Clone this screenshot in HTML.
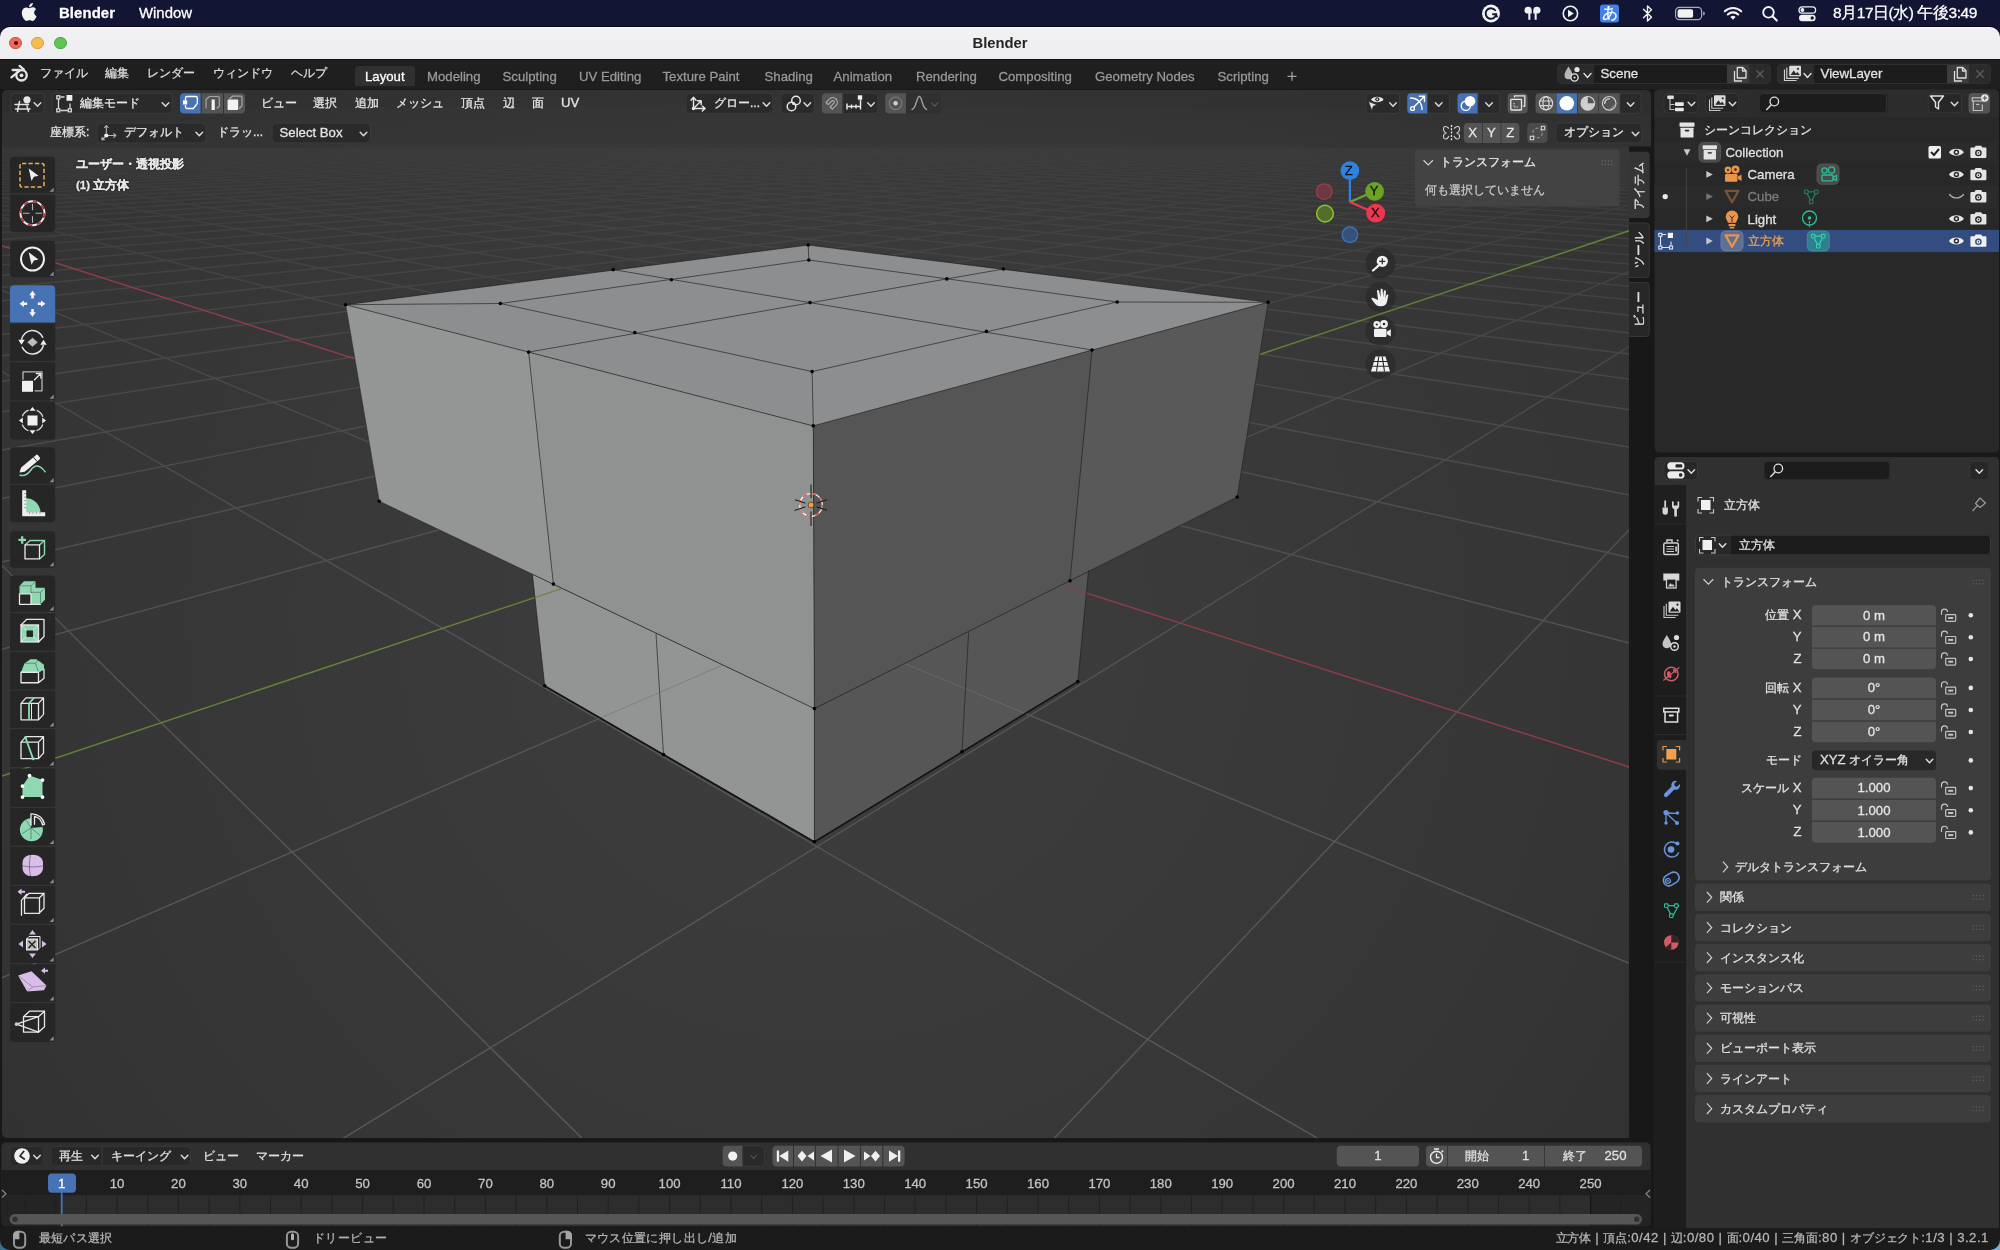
<!DOCTYPE html>
<html lang="ja"><head><meta charset="utf-8"><title>Blender</title>
<style>
*{box-sizing:border-box;margin:0;padding:0}
html,body{width:2000px;height:1250px;overflow:hidden;background:#181818;font-family:"Liberation Sans",sans-serif;font-size:13px;color:#e6e6e6;-webkit-text-stroke:.28px}
#root{position:absolute;left:0;top:0;width:2000px;height:1250px;overflow:hidden;will-change:transform}
.abs{position:absolute}
svg{display:block;overflow:visible}
.t{position:absolute;white-space:nowrap;line-height:16px}

#mac{position:absolute;left:0;top:0;width:2000px;height:40px;background:#131535}
#mac .t{color:#fff;font-size:14.9px;top:4.5px;line-height:17px}
#ttl{position:absolute;left:0;top:27px;width:2000px;height:33px;background:linear-gradient(#fbfbfc 0,#f1f1f3 6%,#eeeef0 100%);border-radius:10px 10px 0 0;border-bottom:1px solid #0e0e0e;box-shadow:0 -.8px 0 #06060e}
#ttl .name{position:absolute;left:0;width:2000px;top:7.6px;text-align:center;font-weight:bold;font-size:14.8px;color:#242424;line-height:17px;-webkit-text-stroke:0}
.tl{position:absolute;width:12.9px;height:12.9px;border-radius:50%;top:9.6px}
#topbar{position:absolute;left:0;top:60px;width:2000px;height:29px;background:#1f1f1f}
#topbar .m{position:absolute;top:5px;font-size:12px;color:#dcdcdc;line-height:16px;white-space:nowrap}
#topbar .tab{position:absolute;top:8.5px;font-size:13.2px;color:#989898;line-height:16px;white-space:nowrap}
#topbar .tabA{position:absolute;left:355px;top:6.2px;width:60px;height:20.2px;background:#303030;border-radius:4px 4px 0 0}
.sel{position:absolute;top:3.6px;height:20.6px;border-radius:4px;background:#2b2b2b;overflow:hidden;border:1px solid #303030}
.sel .fld{position:absolute;top:0;height:20px;background:#1c1c1c}
.sel .cp{position:absolute;top:0;height:20px;background:#3c3c3c}
.sel .tx{position:absolute;top:1.2px;font-size:13.3px;color:#e4e4e4;line-height:16px}

.vh{position:absolute;white-space:nowrap;line-height:16px;font-size:12px;color:#e6e6e6}
.vhl{position:absolute;white-space:nowrap;line-height:16px;font-size:13.2px;color:#e6e6e6}
#vpwrap{position:absolute;left:0;top:89.5px;width:1651px;height:1048.5px;overflow:hidden;border-radius:5px}

.rt{position:absolute;white-space:nowrap;line-height:16px;font-size:12px;color:#e0e0e0}
.rl{position:absolute;white-space:nowrap;line-height:16px;font-size:13.2px;color:#e0e0e0}
.lab{position:absolute;white-space:nowrap;line-height:16px;font-size:12px;color:#e0e0e0;text-align:right;width:120px;left:1681.500px}
.val{position:absolute;white-space:nowrap;line-height:16px;font-size:13.2px;color:#e6e6e6;text-align:center;width:124px;left:1812px}

.bt{position:absolute;white-space:nowrap;line-height:16px;font-size:12px;color:#e0e0e0}
.bl{position:absolute;white-space:nowrap;line-height:16px;font-size:13.2px;color:#e0e0e0}
.fr{position:absolute;white-space:nowrap;line-height:16px;font-size:13.2px;color:#c4c4c4;width:40px;text-align:center;top:1176px}
.st i{font-style:normal;font-size:13.2px;letter-spacing:.46px}
.st{letter-spacing:.38px;position:absolute;white-space:nowrap;line-height:16px;font-size:12px;color:#b4b4b4;top:1229.9px}
#winb{position:absolute;left:0;top:1228px;width:2000px;height:22px;background:#1b1b1b;border-radius:0 0 10px 10px}
#desk{position:absolute;left:0;top:1236px;width:2000px;height:14px;background:linear-gradient(90deg,#3b6f8e,#27466a 40%,#2a4a6e 60%,#7fb2d6)}

.ov{position:absolute;white-space:nowrap;line-height:16px;font-size:12px;color:#e8e8e8}
.vt{position:absolute;white-space:nowrap;line-height:14px;font-size:12px;color:#e0e0e0;transform-origin:0 0;transform:rotate(-90deg)}
#vpwrap{left:1.5px;width:1649px}#vpwrap svg{left:-1.5px !important;top:-.5px !important}</style></head>
<body><div id="root">
<div id="vpwrap"><svg class="vp" width="1651" height="1049" viewBox="0 89 1651 1049" style="position:absolute;left:0;top:0">
<defs><linearGradient id="gfade" x1="0" y1="89" x2="0" y2="1138" gradientUnits="userSpaceOnUse"><stop offset="0" stop-color="#fff" stop-opacity="0.03"/><stop offset="0.058" stop-color="#fff" stop-opacity="0.13"/><stop offset="0.125" stop-color="#fff" stop-opacity="0.3"/><stop offset="0.22" stop-color="#fff" stop-opacity="0.5"/><stop offset="0.39" stop-color="#fff" stop-opacity="0.72"/><stop offset="0.63" stop-color="#fff" stop-opacity="0.95"/><stop offset="1" stop-color="#fff" stop-opacity="1"/></linearGradient><mask id="gm" maskUnits="userSpaceOnUse" x="0" y="89" width="1651" height="1049"><rect x="0" y="89" width="1651" height="1049" fill="url(#gfade)"/></mask><radialGradient id="vig" cx="825" cy="613" r="1000" gradientUnits="userSpaceOnUse"><stop offset="0" stop-color="#3d3d3d"/><stop offset=".3" stop-color="#3b3b3b"/><stop offset=".55" stop-color="#383838"/><stop offset=".8" stop-color="#353535"/><stop offset="1" stop-color="#313131"/></radialGradient></defs>
<rect x="0" y="89" width="1651" height="1049" fill="url(#vig)"/>
<g mask="url(#gm)" fill="none" stroke="#585858" stroke-width="1.45">
<path id="gx" d="M-99426 1059.2L804 104M-134347.6 1400.5L808.1 104M-207363.1 2114.1L812.2 104.1M-455590.9 4540.1L816.3 104.1M-797039 7910.3L820.5 104.2M-791725.6 7910.3L824.7 104.2M-786412.2 7910.3L828.9 104.2M-781098.8 7910.3L833.2 104.3M-775785.4 7910.3L837.4 104.3M-770472 7910.3L841.8 104.3M-765158.6 7910.3L846.1 104.4M-759845.2 7910.3L850.5 104.4M-754531.8 7910.3L854.8 104.5M-749218.4 7910.3L859.3 104.5M-743905 7910.3L863.7 104.6M-738591.5 7910.3L868.2 104.6M-733278.1 7910.3L872.7 104.6M-727964.7 7910.3L877.3 104.7M-722651.3 7910.3L881.8 104.7M-717337.9 7910.3L886.4 104.8M-712024.5 7910.3L891.1 104.8M-706711.1 7910.3L895.7 104.8M-701397.7 7910.3L900.4 104.9M-696084.3 7910.3L905.2 104.9M-690770.9 7910.3L909.9 105M-685457.5 7910.3L914.7 105M-680144.1 7910.3L919.6 105.1M-674830.7 7910.3L924.4 105.1M-669517.3 7910.3L929.3 105.2M-664203.9 7910.3L934.3 105.2M-658890.5 7910.3L939.2 105.2M-653577.1 7910.3L944.2 105.3M-648263.6 7910.3L949.3 105.3M-642950.2 7910.3L954.4 105.4M-637636.8 7910.3L959.5 105.4M-632323.4 7910.3L964.6 105.5M-627010 7910.3L969.8 105.5M-621696.6 7910.3L975 105.6M-616383.2 7910.3L980.3 105.6M-611069.8 7910.3L985.6 105.7M-605756.4 7910.3L990.9 105.7M-600443 7910.3L996.3 105.8M-595129.6 7910.3L1001.7 105.8M-589816.2 7910.3L1007.2 105.9M-584502.8 7910.3L1012.6 105.9M-579189.4 7910.3L1018.2 106M-573876 7910.3L1023.8 106M-568562.6 7910.3L1029.4 106.1M-563249.1 7910.3L1035 106.1M-557935.7 7910.3L1040.7 106.2M-552622.3 7910.3L1046.5 106.2M-547308.9 7910.3L1052.3 106.3M-541995.5 7910.3L1058.1 106.3M-536682.1 7910.3L1064 106.4M-531368.7 7910.3L1069.9 106.4M-526055.3 7910.3L1075.9 106.5M-520741.9 7910.3L1081.9 106.6M-515428.5 7910.3L1088 106.6M-510115.1 7910.3L1094.1 106.7M-504801.7 7910.3L1100.2 106.7M-499488.3 7910.3L1106.4 106.8M-494174.9 7910.3L1112.7 106.8M-488861.5 7910.3L1119 106.9M-483548.1 7910.3L1125.4 107M-478234.7 7910.3L1131.8 107M-472921.2 7910.3L1138.2 107.1M-467607.8 7910.3L1144.7 107.1M-462294.4 7910.3L1151.3 107.2M-456981 7910.3L1157.9 107.3M-451667.6 7910.3L1164.6 107.3M-446354.2 7910.3L1171.3 107.4M-441040.8 7910.3L1178.1 107.4M-435727.4 7910.3L1184.9 107.5M-430414 7910.3L1191.8 107.6M-425100.6 7910.3L1198.8 107.6M-419787.2 7910.3L1205.8 107.7M-414473.8 7910.3L1212.9 107.8M-409160.4 7910.3L1220 107.8M-403847 7910.3L1227.2 107.9M-398533.6 7910.3L1234.4 108M-393220.2 7910.3L1241.7 108M-387906.8 7910.3L1249.1 108.1M-382593.3 7910.3L1256.5 108.2M-377279.9 7910.3L1264 108.2M-371966.5 7910.3L1271.6 108.3M-366653.1 7910.3L1279.2 108.4M-361339.7 7910.3L1286.9 108.4M-356026.3 7910.3L1294.7 108.5M-350712.9 7910.3L1302.5 108.6M-345399.5 7910.3L1310.4 108.7M-340086.1 7910.3L1318.4 108.7M-334772.7 7910.3L1326.5 108.8M-329459.3 7910.3L1334.6 108.9M-324145.9 7910.3L1342.8 109M-318832.5 7910.3L1351 109M-313519.1 7910.3L1359.4 109.1M-308205.7 7910.3L1367.8 109.2M-302892.3 7910.3L1376.3 109.3M-297578.9 7910.3L1384.9 109.4M-292265.4 7910.3L1393.5 109.4M-286952 7910.3L1402.3 109.5M-281638.6 7910.3L1411.1 109.6M-276325.2 7910.3L1420 109.7M-271011.8 7910.3L1429 109.8M-265698.4 7910.3L1438.1 109.8M-260385 7910.3L1447.2 109.9M-255071.6 7910.3L1456.5 110M-249758.2 7910.3L1465.8 110.1M-244444.8 7910.3L1475.2 110.2M-239131.4 7910.3L1484.7 110.3M-233818 7910.3L1494.3 110.4M-228504.6 7910.3L1504.1 110.4M-223191.2 7910.3L1513.9 110.5M-217877.8 7910.3L1523.8 110.6M-212564.4 7910.3L1533.8 110.7M-207250.9 7910.3L1543.9 110.8M-201937.5 7910.3L1554.1 110.9M-196624.1 7910.3L1564.4 111M-191310.7 7910.3L1574.8 111.1M-185997.3 7910.3L1585.3 111.2M-180683.9 7910.3L1595.9 111.3M-175370.5 7910.3L1606.6 111.4M-170057.1 7910.3L1617.5 111.5M-164743.7 7910.3L1628.4 111.6M-159430.3 7910.3L1639.5 111.7M-154116.9 7910.3L1650.7 111.8M-148803.5 7910.3L1662 111.9M-143490.1 7910.3L1673.5 112M-138176.7 7910.3L1685 112.1M-132863.3 7910.3L1696.7 112.2M-127549.9 7910.3L1708.5 112.3M-122236.5 7910.3L1720.4 112.4M-116923 7910.3L1732.5 112.6M-111609.6 7910.3L1744.7 112.7M-106296.2 7910.3L1757 112.8M-100982.8 7910.3L1769.5 112.9M-95669.4 7910.3L1782.1 113M-90356 7910.3L1794.9 113.1M-85042.6 7910.3L1807.8 113.2M-79729.2 7910.3L1820.8 113.4M-74415.8 7910.3L1834 113.5M-69102.4 7910.3L1847.4 113.6M-63789 7910.3L1860.9 113.7M-58475.6 7910.3L1874.5 113.9M-53162.2 7910.3L1888.4 114M-47848.8 7910.3L1902.3 114.1M-42535.4 7910.3L1916.5 114.2M-37222 7910.3L1930.8 114.4M-31908.6 7910.3L1945.3 114.5M-26595.1 7910.3L1960 114.6M-15968.3 7910.3L1989.9 114.9M-10654.9 7910.3L2005.1 115.1M-5341.5 7910.3L2020.5 115.2M-28.1 7910.3L2036.1 115.3M5285.3 7910.3L2051.9 115.5M10598.7 7910.3L2067.9 115.6M15912.1 7910.3L2084.1 115.8M21225.5 7910.3L2100.5 115.9M26538.9 7910.3L2117.1 116.1M31852.3 7910.3L2133.9 116.3M37165.7 7910.3L2151 116.4M42479.1 7910.3L2168.2 116.6M47792.5 7910.3L2185.8 116.7M53105.9 7910.3L2203.5 116.9M58419.4 7910.3L2221.5 117.1M63732.8 7910.3L2239.7 117.2M69046.2 7910.3L2258.1 117.4M74359.6 7910.3L2276.9 117.6M79673 7910.3L2295.8 117.7M84986.4 7910.3L2315.1 117.9M90299.8 7910.3L2334.6 118.1M95613.2 7910.3L2354.4 118.3M100926.6 7910.3L2374.4 118.5M106240 7910.3L2394.8 118.7M111553.4 7910.3L2415.4 118.8M116866.8 7910.3L2436.4 119M122180.2 7910.3L2457.6 119.2M127493.6 7910.3L2479.2 119.4M132807 7910.3L2501.1 119.6M138120.4 7910.3L2523.3 119.8M143433.8 7910.3L2545.8 120M148747.3 7910.3L2568.7 120.3M154060.7 7910.3L2591.9 120.5M159374.1 7910.3L2615.5 120.7M164687.5 7910.3L2639.4 120.9M170000.9 7910.3L2663.8 121.1M175314.3 7910.3L2688.5 121.4M180627.7 7910.3L2713.6 121.6M185941.1 7910.3L2739.1 121.8M191254.5 7910.3L2765 122.1M196567.9 7910.3L2791.3 122.3M201881.3 7910.3L2818.1 122.6M207194.7 7910.3L2845.3 122.8M212508.1 7910.3L2872.9 123.1M217821.5 7910.3L2901.1 123.3M223134.9 7910.3L2929.6 123.6M228448.3 7910.3L2958.7 123.8M233761.7 7910.3L2988.3 124.1M239075.2 7910.3L3018.4 124.4M244388.6 7910.3L3049 124.7M249702 7910.3L3080.2 125M255015.4 7910.3L3111.9 125.3M260328.8 7910.3L3144.2 125.6M265642.2 7910.3L3177.1 125.9M270955.6 7910.3L3210.6 126.2M276269 7910.3L3244.7 126.5M281582.4 7910.3L3279.5 126.8M286895.8 7910.3L3314.9 127.1M292209.2 7910.3L3350.9 127.5M297522.6 7910.3L3387.7 127.8M302836 7910.3L3425.2 128.1M308149.4 7910.3L3463.4 128.5M313462.8 7910.3L3502.3 128.9M318776.2 7910.3L3542.1 129.2M324089.7 7910.3L3582.6 129.6M329403.1 7910.3L3624 130M334716.5 7910.3L3666.2 130.4M340029.9 7910.3L3709.3 130.8M345343.3 7910.3L3753.3 131.2M350656.7 7910.3L3798.3 131.6M355970.1 7910.3L3844.2 132M361283.5 7910.3L3891.1 132.4M366596.9 7910.3L3939 132.9M371910.3 7910.3L3988 133.3M377223.7 7910.3L4038.1 133.8M382537.1 7910.3L4089.3 134.3M387850.5 7910.3L4141.8 134.7M393163.9 7910.3L4195.4 135.2M398477.3 7910.3L4250.3 135.7M403790.7 7910.3L4306.5 136.3M409104.1 7910.3L4364 136.8M414417.6 7910.3L4422.9 137.3M419731 7910.3L4483.3 137.9M425044.4 7910.3L4545.2 138.5M430357.8 7910.3L4608.7 139M435671.2 7910.3L4673.8 139.6M440984.6 7910.3L4740.6 140.3M446298 7910.3L4809.1 140.9M451611.4 7910.3L4879.5 141.5M456924.8 7910.3L4951.8 142.2M462238.2 7910.3L5026 142.9M467551.6 7910.3L5102.3 143.6M472865 7910.3L5180.7 144.3M478178.4 7910.3L5261.4 145.1M483491.8 7910.3L5344.4 145.8M488805.2 7910.3L5429.9 146.6M494118.6 7910.3L5517.8 147.4M499432 7910.3L5608.5 148.3M504745.5 7910.3L5701.9 149.1M510058.9 7910.3L5798.3 150M515372.3 7910.3L5897.7 150.9M520685.7 7910.3L6000.3 151.9M525999.1 7910.3L6106.3 152.8M531312.5 7910.3L6215.7 153.8M536625.9 7910.3L6328.9 154.9M541939.3 7910.3L6446 156M547252.7 7910.3L6567.2 157.1M552566.1 7910.3L6692.7 158.2M557879.5 7910.3L6822.7 159.4M563192.9 7910.3L6957.6 160.7M568506.3 7910.3L7097.5 162M573819.7 7910.3L7242.8 163.3M579133.1 7910.3L7393.8 164.7M584446.5 7910.3L7550.8 166.1M589760 7910.3L7714.2 167.7M595073.4 7910.3L7884.4 169.2M600386.8 7910.3L8061.8 170.9M605700.2 7910.3L8246.9 172.6M611013.6 7910.3L8440.2 174.3M616327 7910.3L8642.3 176.2M621640.4 7910.3L8853.7 178.1M626953.8 7910.3L9075.2 180.2M632267.2 7910.3L9307.4 182.3M637580.6 7910.3L9551.2 184.6M642894 7910.3L9807.5 186.9M648207.4 7910.3L10077.2 189.4M653520.8 7910.3L10361.5 192M658834.2 7910.3L10661.4 194.8M664147.6 7910.3L10978.5 197.7M669461 7910.3L11314.1 200.8M674774.4 7910.3L11670 204.1M680087.9 7910.3L12048.1 207.6M685401.3 7910.3L12450.4 211.3M690714.7 7910.3L12879.4 215.2M696028.1 7910.3L13337.9 219.5M701341.5 7910.3L13829 224M706654.9 7910.3L14356.3 228.8M711968.3 7910.3L14924 234.1M717281.7 7910.3L15536.8 239.7M722595.1 7910.3L16200.4 245.8M727908.5 7910.3L16921.4 252.5M733221.9 7910.3L17707.5 259.7M738535.3 7910.3L18568 267.6M743848.7 7910.3L19514.1 276.3M749162.1 7910.3L20559 286M754475.5 7910.3L21719.2 296.7M759788.9 7910.3L23014.8 308.6M765102.3 7910.3L24471.1 322M770415.8 7910.3L26119.9 337.2M775729.2 7910.3L28001.9 354.5"/>
<path id="gy" d="M-99426 1059.2L-800443.4 7910.3M-77865.5 853.8L-794947.6 7910.3M-63861.9 720.3L-789451.8 7910.3M-54034.6 626.6L-783956 7910.3M-46757.8 557.3L-778460.2 7910.3M-41152.6 503.9L-772964.4 7910.3M-36702.4 461.5L-767468.6 7910.3M-33083.5 427L-761972.8 7910.3M-30082.9 398.4L-756477 7910.3M-27554.6 374.3L-750981.2 7910.3M-25395.2 353.7L-745485.4 7910.3M-23529.5 335.9L-739989.6 7910.3M-21901.4 320.4L-734493.8 7910.3M-20468.2 306.7L-728998 7910.3M-19196.9 294.6L-723502.2 7910.3M-18061.5 283.8L-718006.4 7910.3M-17041.3 274.1L-712510.6 7910.3M-16119.7 265.3L-707014.8 7910.3M-15283 257.3L-701519 7910.3M-14519.9 250L-696023.2 7910.3M-13821.3 243.4L-690527.3 7910.3M-13179.2 237.3L-685031.5 7910.3M-12587.1 231.6L-679535.7 7910.3M-12039.3 226.4L-674039.9 7910.3M-11531.1 221.6L-668544.1 7910.3M-11058.2 217.1L-663048.3 7910.3M-10617.2 212.8L-657552.5 7910.3M-10204.9 208.9L-652056.7 7910.3M-9818.7 205.2L-646560.9 7910.3M-9456 201.8L-641065.1 7910.3M-9114.9 198.5L-635569.3 7910.3M-8793.4 195.5L-630073.5 7910.3M-8490 192.6L-624577.7 7910.3M-8203 189.8L-619081.9 7910.3M-7931.3 187.3L-613586.1 7910.3M-7673.6 184.8L-608090.3 7910.3M-7428.9 182.5L-602594.5 7910.3M-7196.3 180.2L-597098.7 7910.3M-6974.8 178.1L-591602.9 7910.3M-6763.6 176.1L-586107.1 7910.3M-6562.1 174.2L-580611.3 7910.3M-6369.7 172.4L-575115.5 7910.3M-6185.6 170.6L-569619.7 7910.3M-6009.5 168.9L-564123.9 7910.3M-5840.7 167.3L-558628.1 7910.3M-5678.9 165.8L-553132.3 7910.3M-5523.5 164.3L-547636.5 7910.3M-5374.3 162.9L-542140.7 7910.3M-5230.9 161.5L-536644.9 7910.3M-5092.9 160.2L-531149.1 7910.3M-4960 158.9L-525653.3 7910.3M-4832 157.7L-520157.5 7910.3M-4708.6 156.5L-514661.7 7910.3M-4589.6 155.4L-509165.9 7910.3M-4474.7 154.3L-503670.1 7910.3M-4363.7 153.2L-498174.3 7910.3M-4256.4 152.2L-492678.5 7910.3M-4152.6 151.2L-487182.7 7910.3M-4052.2 150.3L-481686.9 7910.3M-3955 149.4L-476191.1 7910.3M-3860.9 148.5L-470695.3 7910.3M-3769.7 147.6L-465199.5 7910.3M-3681.2 146.7L-459703.7 7910.3M-3595.4 145.9L-454207.9 7910.3M-3512.1 145.1L-448712.1 7910.3M-3431.3 144.4L-443216.3 7910.3M-3352.8 143.6L-437720.5 7910.3M-3276.5 142.9L-432224.7 7910.3M-3202.3 142.2L-426728.9 7910.3M-3130.2 141.5L-421233.1 7910.3M-3060 140.8L-415737.3 7910.3M-2991.7 140.2L-410241.5 7910.3M-2925.2 139.5L-404745.7 7910.3M-2860.4 138.9L-399249.9 7910.3M-2797.3 138.3L-393754.1 7910.3M-2735.9 137.7L-388258.3 7910.3M-2675.9 137.2L-382762.5 7910.3M-2617.5 136.6L-377266.7 7910.3M-2560.4 136.1L-371770.9 7910.3M-2504.8 135.5L-366275.1 7910.3M-2450.5 135L-360779.3 7910.3M-2397.4 134.5L-355283.5 7910.3M-2345.6 134L-349787.7 7910.3M-2295 133.5L-344291.9 7910.3M-2245.6 133.1L-338796.1 7910.3M-2197.2 132.6L-333300.3 7910.3M-2150 132.2L-327804.5 7910.3M-2103.7 131.7L-322308.6 7910.3M-2058.5 131.3L-316812.8 7910.3M-2014.3 130.9L-311317 7910.3M-1971 130.4L-305821.2 7910.3M-1928.6 130L-300325.4 7910.3M-1887.1 129.6L-294829.6 7910.3M-1846.5 129.3L-289333.8 7910.3M-1806.7 128.9L-283838 7910.3M-1767.7 128.5L-278342.2 7910.3M-1729.5 128.1L-272846.4 7910.3M-1692.1 127.8L-267350.6 7910.3M-1655.3 127.4L-261854.8 7910.3M-1619.3 127.1L-256359 7910.3M-1584 126.8L-250863.2 7910.3M-1549.4 126.4L-245367.4 7910.3M-1515.4 126.1L-239871.6 7910.3M-1482.1 125.8L-234375.8 7910.3M-1449.4 125.5L-228880 7910.3M-1417.2 125.2L-223384.2 7910.3M-1385.7 124.9L-217888.4 7910.3M-1354.7 124.6L-212392.6 7910.3M-1324.3 124.3L-206896.8 7910.3M-1294.5 124L-201401 7910.3M-1265.1 123.7L-195905.2 7910.3M-1236.3 123.4L-190409.4 7910.3M-1207.9 123.2L-184913.6 7910.3M-1180.1 122.9L-179417.8 7910.3M-1152.7 122.6L-173922 7910.3M-1125.8 122.4L-168426.2 7910.3M-1099.3 122.1L-162930.4 7910.3M-1073.3 121.9L-157434.6 7910.3M-1047.7 121.6L-151938.8 7910.3M-1022.5 121.4L-146443 7910.3M-997.8 121.2L-140947.2 7910.3M-973.4 120.9L-135451.4 7910.3M-949.4 120.7L-129955.6 7910.3M-925.8 120.5L-124459.8 7910.3M-902.5 120.3L-118964 7910.3M-879.7 120L-113468.2 7910.3M-857.1 119.8L-107972.4 7910.3M-835 119.6L-102476.6 7910.3M-813.1 119.4L-96980.8 7910.3M-791.6 119.2L-91485 7910.3M-770.4 119L-85989.2 7910.3M-749.5 118.8L-80493.4 7910.3M-729 118.6L-74997.6 7910.3M-708.7 118.4L-69501.8 7910.3M-688.7 118.2L-64006 7910.3M-669 118L-58510.2 7910.3M-649.6 117.9L-53014.4 7910.3M-630.5 117.7L-47518.6 7910.3M-611.6 117.5L-42022.8 7910.3M-593 117.3L-36527 7910.3M-574.7 117.1L-31031.2 7910.3M-556.6 117L-25535.4 7910.3M-538.8 116.8L-20039.6 7910.3M-521.2 116.6L-14543.8 7910.3M-503.8 116.5L-9048 7910.3M-486.7 116.3L-3552.2 7910.3M-469.8 116.1L1943.6 7910.3M-453.1 116L7439.4 7910.3M-436.7 115.8L12935.2 7910.3M-420.5 115.7L18431 7910.3M-388.6 115.4L29422.6 7910.3M-373 115.2L34918.4 7910.3M-357.6 115.1L40414.2 7910.3M-342.4 114.9L45910.1 7910.3M-327.3 114.8L51405.9 7910.3M-312.5 114.6L56901.7 7910.3M-297.9 114.5L62397.5 7910.3M-283.4 114.4L67893.3 7910.3M-269.1 114.2L73389.1 7910.3M-255 114.1L78884.9 7910.3M-241 114L84380.7 7910.3M-227.2 113.8L89876.5 7910.3M-213.6 113.7L95372.3 7910.3M-200.2 113.6L100868.1 7910.3M-186.9 113.4L106363.9 7910.3M-173.8 113.3L111859.7 7910.3M-160.8 113.2L117355.5 7910.3M-147.9 113.1L122851.3 7910.3M-135.3 113L128347.1 7910.3M-122.7 112.8L133842.9 7910.3M-110.3 112.7L139338.7 7910.3M-98.1 112.6L144834.5 7910.3M-86 112.5L150330.3 7910.3M-74 112.4L155826.1 7910.3M-62.2 112.3L161321.9 7910.3M-50.4 112.1L166817.7 7910.3M-38.9 112L172313.5 7910.3M-27.4 111.9L177809.3 7910.3M-16.1 111.8L183305.1 7910.3M-4.9 111.7L188800.9 7910.3M6.2 111.6L194296.7 7910.3M17.2 111.5L199792.5 7910.3M28 111.4L205288.3 7910.3M38.7 111.3L210784.1 7910.3M49.4 111.2L216279.9 7910.3M59.9 111.1L221775.7 7910.3M70.3 111L227271.5 7910.3M80.5 110.9L232767.3 7910.3M90.7 110.8L238263.1 7910.3M100.8 110.7L243758.9 7910.3M110.8 110.6L249254.7 7910.3M120.6 110.5L254750.5 7910.3M130.4 110.4L260246.3 7910.3M140.1 110.3L265742.1 7910.3M149.6 110.2L271237.9 7910.3M159.1 110.1L276733.7 7910.3M168.5 110.1L282229.5 7910.3M177.8 110L287725.3 7910.3M187 109.9L293221.1 7910.3M196.1 109.8L298716.9 7910.3M205.1 109.7L304212.7 7910.3M214.1 109.6L309708.5 7910.3M222.9 109.5L315204.3 7910.3M231.7 109.5L320700.1 7910.3M240.3 109.4L326195.9 7910.3M248.9 109.3L331691.7 7910.3M257.4 109.2L337187.5 7910.3M265.9 109.1L342683.3 7910.3M274.2 109L348179.1 7910.3M282.5 109L353674.9 7910.3M290.7 108.9L359170.7 7910.3M298.8 108.8L364666.5 7910.3M306.8 108.7L370162.3 7910.3M314.8 108.7L375658.1 7910.3M322.7 108.6L381153.9 7910.3M330.5 108.5L386649.7 7910.3M338.3 108.4L392145.5 7910.3M346 108.4L397641.3 7910.3M353.6 108.3L403137.1 7910.3M361.2 108.2L408632.9 7910.3M368.6 108.1L414128.8 7910.3M376 108.1L419624.6 7910.3M383.4 108L425120.4 7910.3M390.7 107.9L430616.2 7910.3M397.9 107.9L436112 7910.3M405.1 107.8L441607.8 7910.3M412.2 107.7L447103.6 7910.3M419.2 107.7L452599.4 7910.3M426.2 107.6L458095.2 7910.3M433.1 107.5L463591 7910.3M439.9 107.5L469086.8 7910.3M446.7 107.4L474582.6 7910.3M453.5 107.3L480078.4 7910.3M460.2 107.3L485574.2 7910.3M466.8 107.2L491070 7910.3M473.4 107.2L496565.8 7910.3M479.9 107.1L502061.6 7910.3M486.3 107L507557.4 7910.3M492.8 107L513053.2 7910.3M499.1 106.9L518549 7910.3M505.4 106.8L524044.8 7910.3M511.7 106.8L529540.6 7910.3M517.9 106.7L535036.4 7910.3M524 106.7L540532.2 7910.3M530.1 106.6L546028 7910.3M536.2 106.6L551523.8 7910.3M542.2 106.5L557019.6 7910.3M548.2 106.4L562515.4 7910.3M554.1 106.4L568011.2 7910.3M559.9 106.3L573507 7910.3M565.8 106.3L579002.8 7910.3M571.5 106.2L584498.6 7910.3M577.3 106.2L589994.4 7910.3M582.9 106.1L595490.2 7910.3M588.6 106.1L600986 7910.3M594.2 106L606481.8 7910.3M599.7 105.9L611977.6 7910.3M605.2 105.9L617473.4 7910.3M610.7 105.8L622969.2 7910.3M616.1 105.8L628465 7910.3M621.5 105.7L633960.8 7910.3M626.9 105.7L639456.6 7910.3M632.2 105.6L644952.4 7910.3M637.4 105.6L650448.2 7910.3M642.7 105.5L655944 7910.3M647.9 105.5L661439.8 7910.3M653 105.4L666935.6 7910.3M658.1 105.4L672431.4 7910.3M663.2 105.3L677927.2 7910.3M668.2 105.3L683423 7910.3M673.2 105.2L688918.8 7910.3M678.2 105.2L694414.6 7910.3M683.1 105.2L699910.4 7910.3M688 105.1L705406.2 7910.3M692.9 105.1L710902 7910.3M697.7 105L716397.8 7910.3M702.5 105L721893.6 7910.3M707.3 104.9L727389.4 7910.3M712 104.9L732885.2 7910.3M716.7 104.8L738381 7910.3M721.3 104.8L743876.8 7910.3M726 104.7L749372.6 7910.3M730.5 104.7L754868.4 7910.3M735.1 104.7L760364.2 7910.3M739.6 104.6L765860 7910.3M744.1 104.6L771355.8 7910.3M748.6 104.5L537268.1 5500.7M753 104.5L215361.1 2247.8M757.4 104.4L135246.5 1438.2M761.8 104.4L98878.4 1070.7M766.1 104.4L78110 860.9M770.5 104.3L64676.8 725.1M774.7 104.3L55276 630.1M779 104.2L48328.8 559.9M783.2 104.2L42985.6 505.9M787.4 104.2L38748.3 463.1M791.6 104.1L35305.9 428.3M795.8 104.1L32453.7 399.5M799.9 104L30052 375.2M804 104L28001.9 354.5"/>
</g>
<path id="ax1" d="M-404.4 115.5L23926.8 7910.3" stroke="#913c4b" stroke-width="1.5" fill="none"/>
<path id="ax0" d="M-21281.7 7910.3L1974.8 114.8" stroke="#64813a" stroke-width="1.5" fill="none"/>
<polygon points="532.4,574.5 814.4,708.6 814.4,841.8 544.7,685.8" fill="#929594"/>
<polygon points="814.4,708.6 1088.6,570 1077.8,681.6 814.4,841.8" fill="#565656"/>
<clipPath id="lowL"><polygon points="532.4,574.5 814.4,708.6 814.4,841.8 544.7,685.8"/></clipPath><clipPath id="lowR"><polygon points="814.4,708.6 1088.6,570 1077.8,681.6 814.4,841.8"/></clipPath>
<g clip-path="url(#lowL)" fill="none"><g stroke="#000" stroke-opacity=".13" stroke-width="1.100"><use href="#gx"/><use href="#gy"/></g><use href="#ax0" opacity=".75"/></g>
<g clip-path="url(#lowR)" fill="none"><g stroke="#fff" stroke-opacity=".10" stroke-width="1.100"><use href="#gx"/><use href="#gy"/></g><use href="#ax1" opacity=".6"/></g>
<path d="M544.7 685.8L814.4 841.8L1077.8 681.6" fill="none" stroke="#0c0c0c" stroke-width="1.500" stroke-linejoin="round"/>
<polygon points="345.6,304.7 813.3,425.9 814.4,708.6 379.2,501.2" fill="#8f9291"/>
<polygon points="345.6,304.7 528.6,352.1 553.4,584.1 379.2,501.2" fill="#939695"/>
<polygon points="813.3,425.9 1268.1,302.3 1237.2,497 814.4,708.6" fill="#555555"/>
<polygon points="1092,350 1268.1,302.3 1237.2,497 1070,580.8" fill="#595959"/>
<polygon points="345.6,304.7 808.2,245 1268.1,302.3 813.3,425.9" fill="#8d8e90"/>
<path d="M345.6 304.7L808.2 245M808.2 245L1268.1 302.3M1268.1 302.3L813.3 425.9M813.3 425.9L345.6 304.7M345.6 304.7L379.2 501.2M1268.1 302.3L1237.2 497M813.3 425.9L814.4 708.6M379.2 501.2L814.4 708.6M814.4 708.6L1237.2 497M500.4 303.5L808.8 260M808.8 260L1117.2 302M1117.2 302L812.1 371.6M812.1 371.6L500.4 303.5M345.6 304.7L500.4 303.5M808.2 245L808.8 260M1268.1 302.3L1117.2 302M813.3 425.9L812.1 371.6M613.2 269.6L1092 350M1003.5 269L528.6 352.1M528.6 352.1L553.4 584.1M1092 350L1070 580.8M532.4 574.5L544.7 685.8M544.7 685.8L814.4 841.8M814.4 841.8L1077.8 681.6M1077.8 681.6L1088.6 570M814.4 708.6L814.4 841.8M656 633.6L663.5 754.5M968.6 632.4L962 751.8" stroke="#1c1c1c" stroke-opacity=".8" stroke-width="0.8" fill="none"/>
<g fill="#000"><circle cx="345.6" cy="304.7" r="1.8"/><circle cx="808.2" cy="245" r="1.8"/><circle cx="1268.1" cy="302.3" r="1.8"/><circle cx="813.3" cy="425.9" r="1.8"/><circle cx="379.2" cy="501.2" r="1.8"/><circle cx="1237.2" cy="497" r="1.8"/><circle cx="814.4" cy="708.6" r="1.8"/><circle cx="500.4" cy="303.5" r="1.8"/><circle cx="808.8" cy="260" r="1.8"/><circle cx="1117.2" cy="302" r="1.8"/><circle cx="812.1" cy="371.6" r="1.8"/><circle cx="613.2" cy="269.6" r="1.8"/><circle cx="1003.5" cy="269" r="1.8"/><circle cx="528.6" cy="352.1" r="1.8"/><circle cx="1092" cy="350" r="1.8"/><circle cx="810" cy="302.6" r="1.8"/><circle cx="671.4" cy="279.8" r="1.8"/><circle cx="946.8" cy="278.9" r="1.8"/><circle cx="634.8" cy="332.6" r="1.8"/><circle cx="986.4" cy="331.4" r="1.8"/><circle cx="553.4" cy="584.1" r="1.8"/><circle cx="1070" cy="580.8" r="1.8"/><circle cx="544.7" cy="685.8" r="1.8"/><circle cx="663.5" cy="754.5" r="1.8"/><circle cx="814.4" cy="841.8" r="1.8"/><circle cx="962" cy="751.8" r="1.8"/><circle cx="1077.8" cy="681.6" r="1.8"/></g>
<rect x="0" y="89" width="1651" height="58.500" fill="#000" opacity=".075"/>
</svg></div><svg class="abs" style="left:0;top:150px" width="70" height="900" viewBox="0 150 70 900">
<path d="M14 156.8H51.2Q55.2 156.8 55.2 160.8V193.3Q55.2 193.3 55.2 193.3H10Q10 193.3 10 193.3V160.8Q10 156.8 14 156.8Z" fill="#262626"/>
<g transform="translate(32.5 175.05)"><rect x="-12.500" y="-11.500" width="24" height="23.500" rx="2" fill="none" stroke="#e8b05c" stroke-width="1.500" stroke-dasharray="4.300 2.200"/><path d="M-3.800 -6.500l9.800 7.300-4.600.9-2.400 4.300z" fill="#f0f0f0"/></g>
<path d="M53.700 187.60000000000002v4.200h-4.200z" fill="#8c8c8c"/>
<path d="M10 194.7H55.2Q55.2 194.7 55.2 194.7V227.9Q55.2 231.9 51.2 231.9H14Q10 231.9 10 227.9V194.7Q10 194.7 10 194.7Z" fill="#262626"/>
<g transform="translate(32.5 213.3)"><circle r="12" fill="none" stroke="#f0f0f0" stroke-width="1.900"/><circle r="12" fill="none" stroke="#b5353f" stroke-width="1.900" stroke-dasharray="4.700 4.720"/><path d="M-9.500 0h6.500M3 0h6.500M0-9.500v6.500M0 3v6.500" stroke="#b4b4b4" stroke-width="1.100"/></g>
<path d="M14 240.8H51.2Q55.2 240.8 55.2 244.8V273.3Q55.2 277.3 51.2 277.3H14Q10 277.3 10 273.3V244.8Q10 240.8 14 240.8Z" fill="#262626"/>
<g transform="translate(32.5 259.05)"><circle r="11.500" fill="none" stroke="#f0f0f0" stroke-width="2"/><path d="M-3.800 -6.800l9.800 7.300-4.600.9-2.400 4.300z" fill="#f0f0f0"/></g>
<path d="M53.700 271.6v4.200h-4.200z" fill="#8c8c8c"/>
<path d="M14 285.2H51.2Q55.2 285.2 55.2 289.2V322.4Q55.2 322.4 55.2 322.4H10Q10 322.4 10 322.4V289.2Q10 285.2 14 285.2Z" fill="#4772b3"/>
<g transform="translate(32.5 303.79999999999995)"><path d="M0-13l3.300 4.500h-2v3.200h-2.600v-3.200h-2z" fill="#f4f4f4"/><g transform="rotate(90)"><path d="M0-13l3.300 4.500h-2v3.200h-2.600v-3.200h-2z" fill="#f4f4f4"/></g><g transform="rotate(180)"><path d="M0-13l3.300 4.500h-2v3.200h-2.600v-3.200h-2z" fill="#f4f4f4"/></g><g transform="rotate(270)"><path d="M0-13l3.300 4.500h-2v3.200h-2.600v-3.200h-2z" fill="#f4f4f4"/></g></g>
<path d="M10 323.6H55.2Q55.2 323.6 55.2 323.6V361Q55.2 361 55.2 361H10Q10 361 10 361V323.6Q10 323.6 10 323.6Z" fill="#262626"/>
<g transform="translate(32.5 342.3)"><path d="M-11 -2.500a11.200 11.200 0 0 1 21.500-2M11 2.500a11.200 11.200 0 0 1-21.500 2" fill="none" stroke="#e8e8e8" stroke-width="1.500"/><path d="M-14.200 -2.500h6.400l-3.200 5zM14.200 2.500h-6.400l3.200-5z" fill="#f0f0f0"/><path d="M0-4.500l5.200 4.500-5.200 4.500-5.200-4.500z" fill="#bdbdbd"/></g>
<path d="M10 362.3H55.2Q55.2 362.3 55.2 362.3V400.3Q55.2 400.3 55.2 400.3H10Q10 400.3 10 400.3V362.3Q10 362.3 10 362.3Z" fill="#262626"/>
<g transform="translate(32.5 381.3)"><path d="M-9.500 -2v-7.500h19v19h-7" fill="none"  stroke-width="1.300" stroke-linejoin="round" stroke-linecap="round" stroke="#b8b8b8"/><rect x="-10.500" y="-.5" width="11" height="11" fill="#f0f0f0"/><path d="M2 -1.500l6-6M3.800 -7.800h4.500v4.500" fill="none" stroke="#e8e8e8" stroke-width="1.300" stroke-linejoin="round" stroke-linecap="round"/></g>
<path d="M53.700 394.6v4.200h-4.200z" fill="#8c8c8c"/>
<path d="M10 401.5H55.2Q55.2 401.5 55.2 401.5V435.5Q55.2 439.5 51.2 439.5H14Q10 439.5 10 435.5V401.5Q10 401.5 10 401.5Z" fill="#262626"/>
<g transform="translate(32.5 420.5)"><circle r="11" fill="none" stroke="#d8d8d8" stroke-width="1.300" stroke-dasharray="9 8.280" stroke-dashoffset="-4"/><rect x="-5" y="-5" width="10" height="10" fill="#f0f0f0"/><path d="M0-13.500l3 3.800h-6zM0 13.500l3-3.800h-6zM-13.500 0l3.800 3v-6zM13.500 0l-3.800 3v-6z" fill="#f0f0f0"/></g>
<path d="M14 447.2H51.2Q55.2 447.2 55.2 451.2V483.7Q55.2 483.7 55.2 483.7H10Q10 483.7 10 483.7V451.2Q10 447.2 14 447.2Z" fill="#262626"/>
<g transform="translate(32.5 465.45)"><path d="M-13 9.500c5 2 8.500-1 11-4.500s6-5.500 9.500-3.500 4.500 4 5.500 5.500" fill="none" stroke="#8fd9b2" stroke-width="1.500"/><g transform="rotate(-40 -13 7)"><path d="M-13 7l4.500-2.800h19.500q1.200 0 1.200 1.200v3.200q0 1.200-1.200 1.200h-19.500z" fill="#f0f0f0"/><path d="M7.500 4.200v5.600" stroke="#262626" stroke-width=".9"/></g></g>
<path d="M53.700 478.0v4.200h-4.200z" fill="#8c8c8c"/>
<path d="M10 485H55.2Q55.2 485 55.2 485V518.3Q55.2 522.3 51.2 522.3H14Q10 522.3 10 518.3V485Q10 485 10 485Z" fill="#262626"/>
<g transform="translate(32.5 503.65)"><path d="M-6.500 9v-14.500a14.500 14.500 0 0 1 14.500 14.500z" fill="#8fd9b2"/><path d="M-10.300-13.500h4v22h19v4h-23z" fill="#f0f0f0"/><path d="M-8.500-10h2M-8.500-6.500h2M-8.500-3h2M-8.500.5h2M-8.500 4h2M-3 10.500v-1.800M.500 10.500v-1.800M4 10.500v-1.800M7.500 10.500v-1.800" stroke="#262626" stroke-width=".7" opacity=".6"/></g>
<path d="M14 531.2H51.2Q55.2 531.2 55.2 535.2V563.7Q55.2 567.7 51.2 567.7H14Q10 567.7 10 563.7V535.2Q10 531.2 14 531.2Z" fill="#262626"/>
<g transform="translate(32.5 549.45)"><path d="M-7.500 -4.500l5-4.500h14.500v14l-5 4.500" fill="none" stroke="#8fd9b2" stroke-width="1.400" stroke-linejoin="round"/><path d="M7 -4.500l5-4.500" stroke="#8fd9b2" stroke-width="1.400"/><rect x="-7.500" y="-4.500" width="14.500" height="14" fill="none" stroke="#e8e8e8" stroke-width="1.300" stroke-linejoin="round" stroke-linecap="round"/><path d="M-14-9.500h7.500M-10.300-13.300v7.500" stroke="#8fd9b2" stroke-width="2.300"/></g>
<path d="M53.700 562.0v4.200h-4.200z" fill="#8c8c8c"/>
<path d="M14 575.6H51.2Q55.2 575.6 55.2 579.6V612Q55.2 612 55.2 612H10Q10 612 10 612V579.6Q10 575.6 14 575.6Z" fill="#262626"/>
<g transform="translate(32.5 593.8)"><path d="M-13 0v-8l4.500-4.500h11.500v6.500h9.500v12l-4.500 4.500h-9.500v-10.500z" fill="#8fd9b2"/><path d="M-13 -8h11.500l4.500-4.500M-1.500 -8v8M-1.500 -1.500h9.500l4.500-4.500M8 -1.500v12" fill="none" stroke="#262626" stroke-width=".8" opacity=".5"/><path d="M-13 0h11.500v10.500h-11.500zM-1.500 10.500h9.500" fill="none" stroke="#e8e8e8" stroke-width="1.300" stroke-linejoin="round" stroke-linecap="round"/></g>
<path d="M53.700 606.3v4.200h-4.200z" fill="#8c8c8c"/>
<path d="M10 613.2H55.2Q55.2 613.2 55.2 613.2V650.7Q55.2 650.7 55.2 650.7H10Q10 650.7 10 650.7V613.2Q10 613.2 10 613.2Z" fill="#262626"/>
<g transform="translate(32.5 631.95)"><path d="M-11.500 -7l5.500-5.500h17.500v17l-5.500 5.500" fill="none" stroke="#e8e8e8" stroke-width="1.300" stroke-linejoin="round" stroke-linecap="round"/><rect x="-11.500" y="-7" width="17.500" height="17" fill="#8fd9b2" stroke="#e8e8e8" stroke-width="1.300"/><path d="M-11.500-7l6 6M6-7l-6 6M-11.500 10l6-6M6 10l-6-6" stroke="#e8e8e8" stroke-width=".9"/><rect x="-6" y="-1.500" width="6.500" height="6.500" fill="#262626"/></g>
<path d="M10 652H55.2Q55.2 652 55.2 652V689.5Q55.2 689.5 55.2 689.5H10Q10 689.5 10 689.5V652Q10 652 10 652Z" fill="#262626"/>
<g transform="translate(32.5 670.75)"><path d="M-11.500 1.500l3.500-9 6-4h6l7.500 5.500v5l-5 2.500z" fill="#8fd9b2"/><path d="M-8-7.500h11l3-4M3-7.500l3 9" stroke="#262626" stroke-width=".8" opacity=".5" fill="none"/><path d="M-11.500 1.500h17.500v10.500h-17.500zM6 12l5.500-4.500v-9" fill="none" stroke="#e8e8e8" stroke-width="1.300" stroke-linejoin="round" stroke-linecap="round"/></g>
<path d="M10 690.7H55.2Q55.2 690.7 55.2 690.7V728Q55.2 728 55.2 728H10Q10 728 10 728V690.7Q10 690.7 10 690.7Z" fill="#262626"/>
<g transform="translate(32.5 709.35)"><path d="M-11.500 -6l5-5.500h17.500v16.500l-5 5.500h-17.500zM-11.500-6h17.500v16.500M6-6l5-5.500" fill="none" stroke="#e8e8e8" stroke-width="1.300" stroke-linejoin="round" stroke-linecap="round"/><path d="M-3.500 10.500v-16.500l5-5.500" fill="none" stroke="#8fd9b2" stroke-width="1.800"/><path d="M-1 10.500v-16.500" stroke="#e8e8e8" stroke-width="1"/></g>
<path d="M53.700 722.3v4.200h-4.200z" fill="#8c8c8c"/>
<path d="M10 729.3H55.2Q55.2 729.3 55.2 729.3V767Q55.2 767 55.2 767H10Q10 767 10 767V729.3Q10 729.3 10 729.3Z" fill="#262626"/>
<g transform="translate(32.5 748.15)"><path d="M-11.500 -6l5-5.500h17.500v16.500l-5 5.500h-17.500zM-11.500-6h17.500v16.500M6-6l5-5.500" fill="none" stroke="#e8e8e8" stroke-width="1.300" stroke-linejoin="round" stroke-linecap="round"/><path d="M-7-10.500l7.500 21" stroke="#8fd9b2" stroke-width="1.800" fill="none"/><circle cx="-7" cy="-10.500" r="1.600" fill="#8fd9b2"/><circle cx=".5" cy="10.500" r="1.600" fill="#8fd9b2"/></g>
<path d="M53.700 761.3v4.200h-4.200z" fill="#8c8c8c"/>
<path d="M10 768.5H55.2Q55.2 768.5 55.2 768.5V806.7Q55.2 806.7 55.2 806.7H10Q10 806.7 10 806.7V768.5Q10 768.5 10 768.5Z" fill="#262626"/>
<g transform="translate(32.5 787.6)"><polygon points="-3,-12 10,-7.5 10,9.5 -10,9.5 -10,-1.5" fill="#8fd9b2"/><circle cx="-3" cy="-12" r="1.900" fill="#fff"/><circle cx="10" cy="-7.5" r="1.900" fill="#fff"/><circle cx="10" cy="9.5" r="1.900" fill="#fff"/><circle cx="-10" cy="9.5" r="1.900" fill="#fff"/><circle cx="-10" cy="-1.5" r="1.900" fill="#fff"/></g>
<path d="M10 808H55.2Q55.2 808 55.2 808V845.6Q55.2 845.6 55.2 845.6H10Q10 845.6 10 845.6V808Q10 808 10 808Z" fill="#262626"/>
<g transform="translate(32.5 826.8)"><path d="M-1.500 1v-9.500a11.500 11.500 0 1 0 11.500 8.500z" fill="#8fd9b2"/><path d="M-1.500 1l-9 6M-1.500 1l-6.500-10M-1.500 1v11.500M-1.500 1l9 7.500M-1.500 1l11.500-1" stroke="#262626" stroke-width=".7" opacity=".6"/><path d="M-1.500 -1.500v-11.500a13 13 0 0 1 13.500 10.500l-2 .5a11 11 0 0 0-8-8.500v8" fill="none" stroke="#e8e8e8" stroke-width="1.300" stroke-linejoin="round" stroke-linecap="round"/></g>
<path d="M53.700 839.9v4.200h-4.200z" fill="#8c8c8c"/>
<path d="M10 847H55.2Q55.2 847 55.2 847V884.7Q55.2 884.7 55.2 884.7H10Q10 884.7 10 884.7V847Q10 847 10 847Z" fill="#262626"/>
<g transform="translate(32.5 865.85)"><path d="M-10-3c0-5 4-8 10-8s10.500 3 10.500 8v5c0 5-4.500 8.500-10.500 8.500s-10-3.500-10-8.500z" fill="#d7bde8"/><path d="M-2-11c-1.500 7-1.500 14 0 21.500M-10 0c7 1.500 14 1.500 20.500 0" fill="none" stroke="#262626" stroke-width=".8" opacity=".55"/></g>
<path d="M53.700 879.0v4.200h-4.200z" fill="#8c8c8c"/>
<path d="M10 886H55.2Q55.2 886 55.2 886V923.6Q55.2 923.6 55.2 923.6H10Q10 923.6 10 923.6V886Q10 886 10 886Z" fill="#262626"/>
<g transform="translate(32.5 904.8)"><path d="M-8 -7l4.500-4.500h15v15l-4.500 4.500M7-7l4.500-4.500M-8-7h15v15.500h-15z" fill="none" stroke="#e8e8e8" stroke-width="1.300" stroke-linejoin="round" stroke-linecap="round"/><path d="M-11 10.500v-15l5-6" fill="none" stroke="#e8e8e8" stroke-width="1.300" stroke-linejoin="round" stroke-linecap="round"/><path d="M-15-13l4-3.200v2.200h3.500v2h-3.500v2.200z" fill="#d7bde8"/></g>
<path d="M53.700 917.9v4.200h-4.200z" fill="#8c8c8c"/>
<path d="M10 925H55.2Q55.2 925 55.2 925V963Q55.2 963 55.2 963H10Q10 963 10 963V925Q10 925 10 925Z" fill="#262626"/>
<g transform="translate(32.5 944.0)"><rect x="-6" y="-5" width="11" height="11" fill="#bdbdbd" stroke="#e8e8e8" stroke-width="1"/><path d="M-6-5l2.500-2.500h11v11l-2.500 2.500" fill="none" stroke="#e8e8e8" stroke-width="1"/><path d="M-4-3l7 7M3-3l-7 7" stroke="#262626" stroke-width="1.600"/><path d="M0-14l3.500 4.500h-7z" fill="#d7bde8"/><g transform="rotate(90)"><path d="M0-14l3.500 4.500h-7z" fill="#d7bde8"/></g><g transform="rotate(180)"><path d="M0-14l3.500 4.500h-7z" fill="#d7bde8"/></g><g transform="rotate(270)"><path d="M0-14l3.500 4.500h-7z" fill="#d7bde8"/></g></g>
<path d="M53.700 957.3v4.200h-4.200z" fill="#8c8c8c"/>
<path d="M10 964.3H55.2Q55.2 964.3 55.2 964.3V1002Q55.2 1002 55.2 1002H10Q10 1002 10 1002V964.3Q10 964.3 10 964.3Z" fill="#262626"/>
<g transform="translate(32.5 983.15)"><path d="M-14.500 -7.700l13.500-4.300 15 14.400-2.500 4.800-16.800 1.200z" fill="#d7bde8"/><path d="M-14.500-7.700l14.500 11.500 14-1.400M0 3.800l-5.300 4.600" fill="none" stroke="#262626" stroke-width=".7" opacity=".45"/><path d="M8.500-12.500l4-3.200v2.200h3v2h-3v2.200z" fill="#d7bde8"/></g>
<path d="M53.700 996.3v4.200h-4.200z" fill="#8c8c8c"/>
<path d="M10 1003.3H55.2Q55.2 1003.3 55.2 1003.3V1038Q55.2 1042 51.2 1042H14Q10 1042 10 1038V1003.3Q10 1003.3 10 1003.3Z" fill="#262626"/>
<g transform="translate(32.5 1022.65)"><path d="M-9 -6l6-5.500h15v15.500l-6 5.500h-15zM-9-6h15v15.500M6-6l6-5.500" fill="none" stroke="#e8e8e8" stroke-width="1.300" stroke-linejoin="round" stroke-linecap="round"/><path d="M-16 1.500l22-7.500M-16 1.500l22 8" fill="none" stroke="#e8e8e8" stroke-width="1.300" stroke-linejoin="round" stroke-linecap="round"/><circle cx="-16" cy="1.500" r="1.800" fill="#d7bde8"/></g>
<path d="M53.700 1036.3v4.200h-4.200z" fill="#8c8c8c"/>
</svg><svg class="abs" style="left:1300px;top:140px" width="352" height="998" viewBox="1300 140 352 998">
<path d="M1418.8 149.4H1615.7Q1619.7 149.4 1619.7 153.4V202.6Q1619.7 206.6 1615.7 206.6H1418.8Q1414.8 206.6 1414.8 202.6V153.4Q1414.8 149.4 1418.8 149.4Z" fill="#454545" opacity="0.82"/>
<path d="M1423.500 160.300l4.700 4.600 4.700-4.600" fill="none" stroke="#d0d0d0" stroke-width="1.200"/>
<g fill="#6a6a6a"><rect x="1601.5" y="160.3" width="1.300" height="1.300"/><rect x="1601.5" y="163.8" width="1.300" height="1.300"/><rect x="1604.7" y="160.3" width="1.300" height="1.300"/><rect x="1604.7" y="163.8" width="1.300" height="1.300"/><rect x="1607.9" y="160.3" width="1.300" height="1.300"/><rect x="1607.9" y="163.8" width="1.300" height="1.300"/><rect x="1611.1" y="160.3" width="1.300" height="1.300"/><rect x="1611.1" y="163.8" width="1.300" height="1.300"/></g>
<path d="M1629 146.500h22.500v991.500h-22.500z" fill="#181818"/>
<path d="M1629 151.8H1645.7Q1649.7 151.8 1649.7 155.8V214Q1649.7 218 1645.7 218H1629Q1629 218 1629 218V151.8Q1629 151.8 1629 151.8Z" fill="#353535"/>
<path d="M1629 223H1645.7Q1649.7 223 1649.7 227V273.5Q1649.7 277.5 1645.7 277.5H1629Q1629 277.5 1629 277.5V223Q1629 223 1629 223Z" fill="#272727"/>
<path d="M1629 282.5H1645.7Q1649.7 282.5 1649.7 286.5V332.6Q1649.7 336.6 1645.7 336.6H1629Q1629 336.6 1629 336.6V282.5Q1629 282.5 1629 282.5Z" fill="#272727"/>
<path d="M1629 223h17.200q3 0 3 3v48.500q0 3-3 3h-17.200M1629 282.500h17.200q3 0 3 3v48q0 3-3 3h-17.200" fill="none" stroke="#363636" stroke-width="1"/>
<path d="M1349.9 202L1349.900 170.600" stroke="#2f83e0" stroke-width="2.300"/>
<path d="M1349.9 202L1374.600 191.400" stroke="#6ba324" stroke-width="2.300"/>
<path d="M1349.9 202L1375.700 213.200" stroke="#f0364f" stroke-width="2.300"/>
<circle cx="1324.300" cy="191.600" r="7.800" fill="#6d3843" stroke="#a13c4e" stroke-width="1.300"/>
<circle cx="1349.900" cy="234.800" r="7.800" fill="#36527a" stroke="#3b74bd" stroke-width="1.300"/>
<circle cx="1325" cy="213.600" r="8.300" fill="#566c2b" stroke="#8cc22c" stroke-width="1.600"/>
<circle cx="1349.900" cy="170.600" r="9.400" fill="#2f83e0"/>
<circle cx="1374.600" cy="191.400" r="9.400" fill="#6ba324"/>
<circle cx="1375.700" cy="213.200" r="9.400" fill="#f0364f"/>
<circle cx="1380.500" cy="263.3" r="15" fill="#262626" opacity=".62"/>
<circle cx="1380.500" cy="297" r="15" fill="#262626" opacity=".62"/>
<circle cx="1380.500" cy="330.7" r="15" fill="#262626" opacity=".62"/>
<circle cx="1380.500" cy="364.2" r="15" fill="#262626" opacity=".62"/>
<circle cx="1382.300" cy="261.300" r="5.600" fill="#f0f0f0"/><path d="M1378.300 265.800l-5.300 4.700" stroke="#f0f0f0" stroke-width="2.300" stroke-linecap="round"/><path d="M1379.300 261.300h6M1382.300 258.300v6" stroke="#262626" stroke-width="1.200"/>
<path d="M1374.500 298.500c-1.300-1.200-3-1-3-.0 0 1 2.500 3.800 4.300 6 1 1.200 2.700 1.800 5.200 1.800 3.500 0 5.300-1.700 6-4.500l1.300-6c.3-1.500-1.500-1.800-1.900-.5l-.9 3.200.4-7c.1-1.500-1.900-1.600-2.100-.1l-.6 5.800-.5-7.300c-.1-1.500-2.100-1.500-2.100 0l-.1 7.300-1.400-6.300c-.4-1.500-2.300-1.100-2.100.4l1 8.700z" fill="#f0f0f0"/>
<circle cx="1376.800" cy="324.500" r="3.400" fill="#f0f0f0"/><circle cx="1384" cy="324" r="3.900" fill="#f0f0f0"/><rect x="1374" y="328.800" width="12.500" height="8.200" rx="1.200" fill="#f0f0f0"/><path d="M1387 331.500l3.800-2.300v7.300l-3.800-2.300z" fill="#f0f0f0"/><circle cx="1376.800" cy="324.500" r="1.100" fill="#262626"/><circle cx="1384" cy="324" r="1.300" fill="#262626"/>
<path d="M1375.500 356.500h10l4.500 15h-19z" fill="#f0f0f0"/><path d="M1373.500 361.500h14M1372.300 366.200h16.500M1378.800 356.500l-2.300 15M1382.200 356.500l2.300 15" stroke="#262626" stroke-width="1.100"/>
</svg>
<svg class="abs" style="left:784.9px;top:479.1px" width="52" height="52" viewBox="-26 -26 52 52"><circle r="11.300" fill="none" stroke="#f2f2f2" stroke-width="1.200"/><circle r="11.300" fill="none" stroke="#e0463c" stroke-width="1.200" stroke-dasharray="4.437 4.438"/><path d="M0-20.500v13.500M0 6.500v14.500M-16-5.300l10.500 3.500M5.500 1.800l10.500 3.500M-16.500 5.500l11-3.700M5.500-1.800l10.500-3.500" stroke="#161616" stroke-width="1"/><circle r="2.900" fill="#f5a030" stroke="#222" stroke-width=".6"/></svg>
<div class="ov" style="left:76px;top:156px;font-weight:bold;font-size:11.500px;text-shadow:0 0 2px #000">ユーザー・透視投影</div>
<div class="ov" style="left:76px;top:177px;font-weight:bold;font-size:11.500px;text-shadow:0 0 2px #000">(1) 立方体</div>
<div class="ov" style="left:1440px;top:154px">トランスフォーム</div>
<div class="ov" style="left:1425px;top:182px;color:#c8c8c8">何も選択していません</div>
<div class="ov" style="left:1344.800px;top:162.500px;color:#111;font-size:13px">Z</div>
<div class="ov" style="left:1369.800px;top:183.300px;color:#111;font-size:13px">Y</div>
<div class="ov" style="left:1371px;top:205.200px;color:#111;font-size:13px">X</div>
<div class="vt" style="left:1632px;top:210px">アイテム</div>
<div class="vt" style="left:1632px;top:268px">ツール</div>
<div class="vt" style="left:1632px;top:327px">ビュー</div>
<div id="mac">
<svg class="abs" style="left:0;top:0" width="2000" height="28" viewBox="0 0 2000 28">
<path fill="#f4f4f4" transform="translate(20.200 3) scale(.75)" d="M12.152 6.896c-.948 0-2.415-1.078-3.960-1.040-2.040.027-3.910 1.183-4.961 3.014-2.117 3.675-.546 9.103 1.519 12.090 1.013 1.454 2.208 3.090 3.792 3.039 1.520-.065 2.090-.987 3.935-.987 1.831 0 2.350.987 3.960.948 1.637-.026 2.676-1.480 3.676-2.948 1.156-1.688 1.636-3.325 1.662-3.415-.039-.013-3.182-1.221-3.220-4.857-.026-3.040 2.480-4.494 2.597-4.559-1.429-2.090-3.623-2.324-4.390-2.376-2-.156-3.675 1.090-4.610 1.090zM15.530 3.830c.843-1.012 1.400-2.427 1.245-3.830-1.207.052-2.662.805-3.532 1.818-.780.896-1.454 2.338-1.273 3.714 1.338.104 2.715-.688 3.559-1.701"/>
<circle cx="1491" cy="13.5" r="9" fill="#f2f2f2"/><path d="M1495.200 10.300a5.300 5.300 0 1 0 1 4h-3.200" fill="none" stroke="#131535" stroke-width="1.900" stroke-linecap="round"/><path d="M1494.800 16.900l2.100-2.600 1.300 3.100z" fill="#131535"/>
<g fill="#f0f0f0"><path d="M1524.500 10.500a3.600 3.600 0 0 1 7.200-.3v3.300h-1.300v6.300h-2.100v-6.300h-1.200a3 3 0 0 1-2.600-3z"/><path d="M1540.500 10.500a3.600 3.600 0 0 0-7.200-.3v3.300h1.300v6.300h2.100v-6.300h1.200a3 3 0 0 0 2.600-3z"/></g>
<circle cx="1570.400" cy="13.500" r="7.200" fill="none" stroke="#f2f2f2" stroke-width="1.600"/><path d="M1568 9.800l5.800 3.700-5.800 3.700z" fill="#f2f2f2"/>
<rect x="1600" y="4.500" width="19" height="18" rx="3" fill="#3f7fe6"/>
<path d="M1643.500 9.300l8 8-4 3.700v-15l4 3.700-8 8" fill="none" stroke="#f2f2f2" stroke-width="1.400" stroke-linejoin="round" stroke-linecap="round"/>
<rect x="1675.600" y="7.300" width="26" height="12.400" rx="3.600" fill="none" stroke="#a9aab8" stroke-width="1.200"/><rect x="1677.600" y="9.300" width="15.500" height="8.400" rx="1.800" fill="#f2f2f2"/><path d="M1703.200 11.500v4c1.300-.3 1.600-1.200 1.600-2s-.3-1.700-1.600-2z" fill="#a9aab8"/>
<g fill="none" stroke="#f2f2f2" stroke-width="2.100" stroke-linecap="round"><path d="M1724.800 11.300a11.700 11.700 0 0 1 16.400 0"/><path d="M1727.800 14.500a7.500 7.500 0 0 1 10.400 0"/></g><path d="M1733 19.700l-2.600-2.700a3.700 3.700 0 0 1 5.200 0z" fill="#f2f2f2"/>
<circle cx="1768.500" cy="12.300" r="5.300" fill="none" stroke="#f2f2f2" stroke-width="1.900"/><path d="M1772.500 16.300l4.300 4.300" stroke="#f2f2f2" stroke-width="2.100" stroke-linecap="round"/>
<rect x="1799" y="6.800" width="16.600" height="6.400" rx="3.200" fill="none" stroke="#f2f2f2" stroke-width="1.300"/><circle cx="1802.400" cy="10" r="1.900" fill="#f2f2f2"/><rect x="1799" y="14.800" width="16.600" height="6.400" rx="3.200" fill="#f2f2f2"/><circle cx="1812.200" cy="18" r="1.700" fill="#131535"/>
</svg>
<div class="t" style="left:59px;font-weight:bold;letter-spacing:.1px">Blender</div>
<div class="t" style="left:139px">Window</div>
<div class="t" style="left:1601.500px;top:3.800px;font-size:15.500px;width:16px;text-align:center">あ</div>
<div class="t" style="left:1833px;top:4px;font-size:15.500px;letter-spacing:-.45px">8月17日(水) 午後3:49</div>
</div>
<div id="ttl"><div class="name">Blender</div>
<div class="tl" style="left:9.100px;background:#ee6a5f;border:.5px solid #d65045"></div><div class="abs" style="left:13.500px;top:14px;width:4.200px;height:4.200px;border-radius:50%;background:#4d0a05"></div>
<div class="tl" style="left:31.400px;background:#f5bd4f;border:.5px solid #d9a03a"></div>
<div class="tl" style="left:53.700px;background:#61c454;border:.5px solid #4ea73f"></div>
</div>
<div id="topbar"><div class="tabA"></div>
<svg class="abs" style="left:0;top:0" width="2000" height="29" viewBox="0 60 2000 29">
<g fill="none" stroke="#e4e4e4" stroke-width="2.300" stroke-linecap="round" stroke-linejoin="round"><path d="M11.400 77.300l8-6.400M12.600 70h6.600M19.600 65.900l4.200 3.400"/><circle cx="21.500" cy="75.300" r="5.200"/></g><circle cx="21.500" cy="75.300" r="1.900" fill="#e4e4e4"/>
<path d="M1287.500 76.300h9M1292 71.800v9" stroke="#a0a0a0" stroke-width="1.300"/>
</svg>
<div class="m" style="left:40px">ファイル</div>
<div class="m" style="left:105px">編集</div>
<div class="m" style="left:147px">レンダー</div>
<div class="m" style="left:213px">ウィンドウ</div>
<div class="m" style="left:291px">ヘルプ</div>
<div class="tab" style="left:365px;color:#fff">Layout</div>
<div class="tab" style="left:427px">Modeling</div>
<div class="tab" style="left:502.5px">Sculpting</div>
<div class="tab" style="left:579px">UV Editing</div>
<div class="tab" style="left:662.5px">Texture Paint</div>
<div class="tab" style="left:764.5px">Shading</div>
<div class="tab" style="left:833.5px">Animation</div>
<div class="tab" style="left:916px">Rendering</div>
<div class="tab" style="left:998.5px">Compositing</div>
<div class="tab" style="left:1095px">Geometry Nodes</div>
<div class="tab" style="left:1217.5px">Scripting</div>
<div class="sel" style="left:1557px;width:213.500px">
<div class="fld" style="left:35.500px;width:133.500px"></div><div class="cp" style="left:169px;width:22px"></div>
<div class="tx" style="left:42.500px">Scene</div>
<svg class="abs" style="left:0;top:-1.300px" width="214" height="22" viewBox="0 0 214 22">
<path d="M10.500 3.500c2 3.300 4 6 4 8.700a4 4 0 0 1-8 0c0-2.700 2-5.400 4-8.700z" fill="#d8d8d8" opacity=".8"/><circle cx="19" cy="6.500" r="2.600" fill="#e4e4e4"/><circle cx="16.500" cy="14.500" r="3.600" fill="#1c1c1c" stroke="#e4e4e4" stroke-width="1.400"/><circle cx="16.500" cy="14.500" r="1.100" fill="#e4e4e4"/>
<path d="M26.0 10.6l3.5 3.8l3.5 -3.8" fill="none" stroke="#d8d8d8" stroke-width="1.5" stroke-linecap="round" stroke-linejoin="round"/>
<g fill="none" stroke="#dedede" stroke-width="1.300" stroke-linejoin="round"><path d="M176.500 8v10h7.600"/><path d="M179.300 4.500h5.500l3.200 3.200v7.300h-8.700z" fill="#3c3c3c"/><path d="M184.500 4.700v3.300h3.300"/></g>
<path d="M198.300 7.300l7.400 7.400M205.700 7.300l-7.400 7.400" stroke="#5e5e5e" stroke-width="1.300"/>
</svg></div>
<div class="sel" style="left:1777px;width:213.500px">
<div class="fld" style="left:35.500px;width:133.500px"></div><div class="cp" style="left:169px;width:22px"></div>
<div class="tx" style="left:42.500px">ViewLayer</div>
<svg class="abs" style="left:0;top:-1.300px" width="214" height="22" viewBox="0 0 214 22">
<path d="M6.500 6.500v11h12" fill="none" stroke="#d0d0d0" stroke-width="1.200"/><path d="M8.800 4.500v10.800h12" fill="none" stroke="#d0d0d0" stroke-width="1.200"/><rect x="11.200" y="2.800" width="11.800" height="10.400" rx="1" fill="#dcdcdc"/><path d="M12.500 12l3.200-4.500 2.300 3 1.500-1.600 2.300 3.100z" fill="#2b2b2b"/><circle cx="20" cy="5.800" r="1.100" fill="#2b2b2b"/>
<path d="M26.0 10.6l3.5 3.8l3.5 -3.8" fill="none" stroke="#d8d8d8" stroke-width="1.5" stroke-linecap="round" stroke-linejoin="round"/>
<g fill="none" stroke="#dedede" stroke-width="1.300" stroke-linejoin="round"><path d="M176.500 8v10h7.600"/><path d="M179.300 4.500h5.500l3.200 3.200v7.300h-8.700z" fill="#3c3c3c"/><path d="M184.500 4.700v3.300h3.300"/></g>
<path d="M198.300 7.300l7.400 7.400M205.700 7.300l-7.400 7.400" stroke="#5e5e5e" stroke-width="1.300"/>
</svg></div>
</div>
<svg class="abs" style="left:0;top:89px" width="1651" height="60" viewBox="0 89 1651 60">
<path d="M15 93.2H40.2Q44.2 93.2 44.2 97.2V109.4Q44.2 113.4 40.2 113.4H15Q11 113.4 11 109.4V97.2Q11 93.2 15 93.2Z" fill="#2a2a2a" stroke="#3b3b3b" stroke-width="1"/>
<g stroke="#e0e0e0" stroke-width="1.500" fill="none" stroke-linecap="round"><path d="M15 104.500h13.500M15.500 109h14.500M19.500 101.500l-2 10M27 106l1.500 5.500"/></g><circle cx="27" cy="99.800" r="3.600" fill="#e6e6e6"/>
<path d="M34.2 102.7l3.3 3.6l3.3 -3.6" fill="none" stroke="#d8d8d8" stroke-width="1.5" stroke-linecap="round" stroke-linejoin="round"/>
<path d="M56 93.2H168.3Q172.3 93.2 172.3 97.2V109.4Q172.3 113.4 168.3 113.4H56Q52 113.4 52 109.4V97.2Q52 93.2 56 93.2Z" fill="#2a2a2a" stroke="#3b3b3b" stroke-width="1"/>
<g stroke="#d8d8d8" stroke-width="1.300" fill="none"><path d="M58.500 98.500v10M60.500 110.500h8M70 108.500v-5M60.500 97h4"/><rect x="56.800" y="95.800" width="3" height="3" fill="#2a2a2a"/><rect x="56.800" y="108.800" width="3" height="3" fill="#2a2a2a"/><rect x="68.300" y="108.800" width="3" height="3" fill="#2a2a2a"/></g><rect x="66.500" y="95" width="5.800" height="5.800" fill="#f0f0f0"/>
<path d="M162.2 102.7l3.3 3.6l3.3 -3.6" fill="none" stroke="#d8d8d8" stroke-width="1.5" stroke-linecap="round" stroke-linejoin="round"/>
<path d="M184 93.2H200.6Q200.6 93.2 200.6 93.2V113.4Q200.6 113.4 200.6 113.4H184Q180 113.4 180 109.4V97.2Q180 93.2 184 93.2Z" fill="#4772b3"/>
<path d="M201.6 93.2H223Q223 93.2 223 93.2V113.4Q223 113.4 223 113.4H201.6Q201.6 113.4 201.6 113.4V93.2Q201.6 93.2 201.6 93.2Z" fill="#545454"/>
<path d="M224 93.2H241Q245 93.2 245 97.2V109.4Q245 113.4 241 113.4H224Q224 113.4 224 113.4V93.2Q224 93.2 224 93.2Z" fill="#545454"/>
<path d="M185.500 100.500v-2.500q0-1.500 1.500-1.500h8.800q1.500 0 1.500 1.500v5.500l-4 5h-6.300q-1.500 0-1.500-1.500v-2" fill="none" stroke="#fff" stroke-width="1.300"/><rect x="183" y="100.300" width="4.200" height="4.200" fill="#fff"/>
<path d="M206 108.500v-9l3.500-3h8.500q1.300 0 1.300 1.300v8.500l-2.500 2.200" fill="none" stroke="#a8a8a8" stroke-width="1.200"/><rect x="211.600" y="99.500" width="3.200" height="10.500" fill="#f2f2f2"/>
<path d="M229.500 99l3-2.800h8.200q1.300 0 1.300 1.300v8.300l-2.800 2.700" fill="none" stroke="#a8a8a8" stroke-width="1.200"/><rect x="227.600" y="99.600" width="10.600" height="10.400" rx=".8" fill="#f2f2f2"/>
<path d="M690 93.2H769Q773 93.2 773 97.2V109.4Q773 113.4 769 113.4H690Q686 113.4 686 109.4V97.2Q686 93.2 690 93.2Z" fill="#2a2a2a" stroke="#3b3b3b" stroke-width="1"/>
<g fill="none" stroke="#e6e6e6" stroke-width="1.400" stroke-linecap="round" stroke-linejoin="round"><path d="M693.500 98v10.500h11M691 100.200l2.500-3 2.500 3M702.300 106l2.800 2.500-2.800 2.500M694.500 107.500l6.500-6.500M697.500 100.800h3.700v3.700"/></g><circle cx="693.500" cy="108.500" r="1.700" fill="#e6e6e6"/>
<path d="M763.2 102.7l3.3 3.6l3.3 -3.6" fill="none" stroke="#d8d8d8" stroke-width="1.5" stroke-linecap="round" stroke-linejoin="round"/>
<path d="M785 93.2H810.3Q814.3 93.2 814.3 97.2V109.4Q814.3 113.4 810.3 113.4H785Q781 113.4 781 109.4V97.2Q781 93.2 785 93.2Z" fill="#2a2a2a" stroke="#3b3b3b" stroke-width="1"/>
<g fill="none" stroke="#e6e6e6" stroke-width="1.500"><circle cx="796" cy="100.500" r="4.300"/><circle cx="791.500" cy="106.500" r="4.300"/></g><circle cx="793.700" cy="103.500" r="1.600" fill="#e6e6e6"/>
<path d="M804.0 102.7l3.3 3.6l3.3 -3.6" fill="none" stroke="#d8d8d8" stroke-width="1.5" stroke-linecap="round" stroke-linejoin="round"/>
<path d="M825.8 93.2H842.8Q842.8 93.2 842.8 93.2V113.4Q842.8 113.4 842.8 113.4H825.8Q821.8 113.4 821.8 109.4V97.2Q821.8 93.2 825.8 93.2Z" fill="#545454"/>
<path d="M842.8 93.2H873.8Q877.8 93.2 877.8 97.2V109.4Q877.8 113.4 873.8 113.4H842.8Q842.8 113.4 842.8 113.4V93.2Q842.8 93.2 842.8 93.2Z" fill="#2a2a2a" stroke="#3b3b3b" stroke-width="1"/>
<path d="M826 102.500l3.600-3.600a4.600 4.600 0 0 1 6.500 6.500l-3.800 3.800-2.200-2.200 3.800-3.800a1.500 1.500 0 0 0-2.200-2.200l-3.500 3.500z" fill="none" stroke="#a9a9a9" stroke-width="1.200" stroke-linejoin="round"/>
<path d="M847 106.500h13.500M847 103.500v6M851.500 104.500v4M856 104.500v4M860.500 99.500v10" stroke="#e6e6e6" stroke-width="1.500" fill="none"/><rect x="857.800" y="95.300" width="4.400" height="4.400" fill="#f0f0f0"/>
<path d="M867.7 102.7l3.3 3.6l3.3 -3.6" fill="none" stroke="#d8d8d8" stroke-width="1.5" stroke-linecap="round" stroke-linejoin="round"/>
<path d="M889.2 93.2H906Q906 93.2 906 93.2V113.4Q906 113.4 906 113.4H889.2Q885.2 113.4 885.2 109.4V97.2Q885.2 93.2 889.2 93.2Z" fill="#545454"/>
<path d="M906 93.2H937Q941 93.2 941 97.2V109.4Q941 113.4 937 113.4H906Q906 113.4 906 113.4V93.2Q906 93.2 906 93.2Z" fill="#303030"/>
<circle cx="895.600" cy="103.300" r="6.300" fill="none" stroke="#7a7a7a" stroke-width="1.100"/><circle cx="895.600" cy="103.300" r="2.200" fill="#cfcfcf"/>
<path d="M911.500 109.500c5 0 4.800-13 7.800-13s2.800 13 7.800 13" fill="none" stroke="#a0a0a0" stroke-width="1.400"/>
<path d="M931.8 102.9l3.0 3.2l3.0 -3.2" fill="none" stroke="#5a5a5a" stroke-width="1.2" stroke-linecap="round" stroke-linejoin="round"/>
<path d="M1370 93.2H1395.7Q1399.7 93.2 1399.7 97.2V109.4Q1399.7 113.4 1395.7 113.4H1370Q1366 113.4 1366 109.4V97.2Q1366 93.2 1370 93.2Z" fill="#2a2a2a" stroke="#3b3b3b" stroke-width="1"/>
<path d="M1371 99.500c2.600-3.600 10-3.600 12.600 0-2.600 3.600-10 3.600-12.600 0z" fill="#e6e6e6"/><circle cx="1377.300" cy="99.300" r="2.100" fill="#2a2a2a"/><circle cx="1377.300" cy="99.300" r=".9" fill="#e6e6e6"/><path d="M1368.500 101.500l8.500 3.300-3.800 1.400-1.300 4.300z" fill="#e6e6e6" stroke="#2a2a2a" stroke-width=".6"/>
<path d="M1389.7 102.7l3.3 3.6l3.3 -3.6" fill="none" stroke="#d8d8d8" stroke-width="1.5" stroke-linecap="round" stroke-linejoin="round"/>
<path d="M1411.2 93.2H1427.8Q1427.8 93.2 1427.8 93.2V113.4Q1427.8 113.4 1427.8 113.4H1411.2Q1407.2 113.4 1407.2 109.4V97.2Q1407.2 93.2 1411.2 93.2Z" fill="#4772b3"/>
<path d="M1427.8 93.2H1445.5Q1449.5 93.2 1449.5 97.2V109.4Q1449.5 113.4 1445.5 113.4H1427.8Q1427.8 113.4 1427.8 113.4V93.2Q1427.8 93.2 1427.8 93.2Z" fill="#2a2a2a" stroke="#3b3b3b" stroke-width="1"/>
<g fill="none" stroke="#fff" stroke-width="1.400" stroke-linecap="round"><path d="M1410.500 98c7 0 11.500 4.500 11.500 11.500M1413.800 107l10.500-10.500M1419.300 96.300h5.200v5.200"/><circle cx="1412.500" cy="108.500" r="1.900"/></g>
<path d="M1435.4 102.7l3.3 3.6l3.3 -3.6" fill="none" stroke="#d8d8d8" stroke-width="1.5" stroke-linecap="round" stroke-linejoin="round"/>
<path d="M1461.5 93.2H1478Q1478 93.2 1478 93.2V113.4Q1478 113.4 1478 113.4H1461.5Q1457.5 113.4 1457.5 109.4V97.2Q1457.5 93.2 1461.5 93.2Z" fill="#4772b3"/>
<path d="M1478 93.2H1495.8Q1499.8 93.2 1499.8 97.2V109.4Q1499.8 113.4 1495.8 113.4H1478Q1478 113.4 1478 113.4V93.2Q1478 93.2 1478 93.2Z" fill="#2a2a2a" stroke="#3b3b3b" stroke-width="1"/>
<circle cx="1470" cy="101.300" r="5.300" fill="#fff"/><circle cx="1465.800" cy="105.800" r="4.600" fill="none" stroke="#fff" stroke-width="1.400"/>
<path d="M1485.7 102.7l3.3 3.6l3.3 -3.6" fill="none" stroke="#d8d8d8" stroke-width="1.5" stroke-linecap="round" stroke-linejoin="round"/>
<path d="M1511.7 93.2H1523.7Q1527.7 93.2 1527.7 97.2V109.4Q1527.7 113.4 1523.7 113.4H1511.7Q1507.7 113.4 1507.7 109.4V97.2Q1507.7 93.2 1511.7 93.2Z" fill="#545454"/>
<g fill="none" stroke="#e6e6e6" stroke-width="1.300"><path d="M1514.500 97.500v-1.700h10.300v10.300h-1.700"/><rect x="1510.800" y="99.300" width="10.700" height="10.700" rx=".8"/></g><path d="M1514 103v4h4" fill="none" stroke="#e6e6e6" stroke-width="1" stroke-dasharray="1.200 1"/>
<path d="M1539.5 93.2H1556.5Q1556.5 93.2 1556.5 93.2V113.4Q1556.5 113.4 1556.5 113.4H1539.5Q1535.5 113.4 1535.5 109.4V97.2Q1535.5 93.2 1539.5 93.2Z" fill="#545454"/>
<path d="M1556.5 93.2H1577Q1577 93.2 1577 93.2V113.4Q1577 113.4 1577 113.4H1556.5Q1556.5 113.4 1556.5 113.4V93.2Q1556.5 93.2 1556.5 93.2Z" fill="#4772b3"/>
<path d="M1577.5 93.2H1598Q1598 93.2 1598 93.2V113.4Q1598 113.4 1598 113.4H1577.5Q1577.5 113.4 1577.5 113.4V93.2Q1577.5 93.2 1577.5 93.2Z" fill="#545454"/>
<path d="M1598.5 93.2H1620Q1620 93.2 1620 93.2V113.4Q1620 113.4 1620 113.4H1598.5Q1598.5 113.4 1598.5 113.4V93.2Q1598.5 93.2 1598.5 93.2Z" fill="#545454"/>
<path d="M1620 93.2H1637.2Q1641.2 93.2 1641.2 97.2V109.4Q1641.2 113.4 1637.2 113.4H1620Q1620 113.4 1620 113.4V93.2Q1620 93.2 1620 93.2Z" fill="#2a2a2a" stroke="#3b3b3b" stroke-width="1"/>
<g fill="none" stroke="#d6d6d6" stroke-width="1.200"><circle cx="1546" cy="103.300" r="6.600"/><ellipse cx="1546" cy="103.300" rx="3" ry="6.600"/><path d="M1539.800 101h12.400M1539.800 105.600h12.400"/></g>
<circle cx="1566.800" cy="103.300" r="7.300" fill="#fff"/>
<circle cx="1587.800" cy="103.300" r="6.800" fill="none" stroke="#cfcfcf" stroke-width="1.200"/><path d="M1587.800 96.500v6.800h6.800a6.800 6.800 0 0 1-13.200 2.300a6.800 6.800 0 0 1 6.400-9.100z" fill="#cfcfcf"/>
<circle cx="1609.200" cy="103.300" r="6.800" fill="none" stroke="#cfcfcf" stroke-width="1.200"/><path d="M1604.800 103.300a4.500 4.500 0 0 1 4.500-4.500" fill="none" stroke="#cfcfcf" stroke-width="1.600" stroke-linecap="round"/><path d="M1610 109.500l4.800-4.800M1612.500 108.800l2.500-2.500" stroke="#9a9a9a" stroke-width="1"/>
<path d="M1627.3 102.7l3.3 3.6l3.3 -3.6" fill="none" stroke="#d8d8d8" stroke-width="1.5" stroke-linecap="round" stroke-linejoin="round"/>
<path d="M100.9 123H202Q206 123 206 127V139Q206 143 202 143H100.9Q96.9 143 96.9 139V127Q96.9 123 100.9 123Z" fill="#2a2a2a" stroke="#3b3b3b" stroke-width="1"/>
<g fill="none" stroke="#b8b8b8" stroke-width="1.100" stroke-linecap="round" stroke-linejoin="round"><path d="M106.300 133v-7M104.500 127.500l1.800-2 1.800 2M108.500 135.500h7M113.800 133.700l2 1.800-2 1.800M104.800 137l-2.800 2.800M102 137.300v2.500h2.500"/></g><circle cx="106.300" cy="135.500" r="2.100" fill="#f0f0f0"/>
<path d="M196.0 132.2l3.3 3.6l3.3 -3.6" fill="none" stroke="#d8d8d8" stroke-width="1.5" stroke-linecap="round" stroke-linejoin="round"/>
<path d="M276 123H366.5Q370.5 123 370.5 127V139Q370.5 143 366.5 143H276Q272 143 272 139V127Q272 123 276 123Z" fill="#2a2a2a" stroke="#3b3b3b" stroke-width="1"/>
<path d="M360.2 132.2l3.3 3.6l3.3 -3.6" fill="none" stroke="#d8d8d8" stroke-width="1.5" stroke-linecap="round" stroke-linejoin="round"/>
<g fill="none" stroke="#cfcfcf" stroke-width="1.100"><path d="M1449 128.500c-3.500-3.500-6-2-5.500 1s3 3.500 3 3.500-3.500 1-3 4 4 2.500 5.500-1M1454 128.500c3.500-3.500 6-2 5.500 1s-3 3.500-3 3.500 3.500 1 3 4-4 2.500-5.500-1"/><path d="M1451.500 125v16.500" stroke-dasharray="2 1.300" stroke="#e6e6e6" stroke-width="1.300"/></g>
<path d="M1467.8 123H1482Q1482 123 1482 123V143Q1482 143 1482 143H1467.8Q1463.8 143 1463.8 139V127Q1463.8 123 1467.8 123Z" fill="#545454"/>
<path d="M1482.7 123H1500.6Q1500.6 123 1500.6 123V143Q1500.6 143 1500.6 143H1482.7Q1482.7 143 1482.7 143V123Q1482.7 123 1482.7 123Z" fill="#545454"/>
<path d="M1501.3 123H1515.4Q1519.4 123 1519.4 127V139Q1519.4 143 1515.4 143H1501.3Q1501.3 143 1501.3 143V123Q1501.3 123 1501.3 123Z" fill="#545454"/>
<path d="M1531.2 123H1543.5Q1547.5 123 1547.5 127V139Q1547.5 143 1543.5 143H1531.2Q1527.2 143 1527.2 139V127Q1527.2 123 1531.2 123Z" fill="#4b4b4b"/>
<circle cx="1537.500" cy="133" r="4.800" fill="none" stroke="#8a8a8a" stroke-width="1.300" stroke-dasharray="3 2"/><rect x="1541.300" y="126.300" width="3.400" height="3.400" fill="none" stroke="#d0d0d0" stroke-width="1.100"/><rect x="1530.300" y="136.300" width="3.400" height="3.400" fill="none" stroke="#d0d0d0" stroke-width="1.100"/>
<path d="M1559.7 123H1638Q1642 123 1642 127V139Q1642 143 1638 143H1559.7Q1555.7 143 1555.7 139V127Q1555.7 123 1559.7 123Z" fill="#2a2a2a" stroke="#3b3b3b" stroke-width="1"/>
<path d="M1632.2 132.2l3.3 3.6l3.3 -3.6" fill="none" stroke="#d8d8d8" stroke-width="1.5" stroke-linecap="round" stroke-linejoin="round"/>
</svg>
<div class="vh" style="left:80px;top:94.5px">編集モード</div>
<div class="vh" style="left:261px;top:94.5px">ビュー</div>
<div class="vh" style="left:313px;top:94.5px">選択</div>
<div class="vh" style="left:355px;top:94.5px">追加</div>
<div class="vh" style="left:396px;top:94.5px">メッシュ</div>
<div class="vh" style="left:461px;top:94.5px">頂点</div>
<div class="vh" style="left:502.5px;top:94.5px">辺</div>
<div class="vh" style="left:532px;top:94.5px">面</div>
<div class="vhl" style="left:561px;top:95px">UV</div>
<div class="vh" style="left:714px;top:94.5px">グロー...</div>
<div class="vh" style="left:50px;top:124.2px">座標系:</div>
<div class="vh" style="left:124px;top:124.2px">デフォルト</div>
<div class="vh" style="left:217px;top:124.2px">ドラッ...</div>
<div class="vhl" style="left:279.5px;top:125px">Select Box</div>
<div class="vhl" style="left:1468.3px;top:125px">X</div>
<div class="vhl" style="left:1487px;top:125px">Y</div>
<div class="vhl" style="left:1506.3px;top:125px">Z</div>
<div class="vh" style="left:1563.5px;top:124.2px">オプション</div>
<svg class="abs" style="left:1654px;top:89px" width="346" height="366" viewBox="1654 89 346 366">
<path d="M1659.5 89.5H1994Q1999 89.5 1999 94.5V447.5Q1999 452.5 1994 452.5H1659.5Q1654.5 452.5 1654.5 447.5V94.5Q1654.5 89.5 1659.5 89.5Z" fill="#282828"/>
<path d="M1659.5 89.5H1994Q1999 89.5 1999 94.5V117Q1999 117 1999 117H1654.5Q1654.5 117 1654.5 117V94.5Q1654.5 89.5 1659.5 89.5Z" fill="#2c2c2c"/>
<rect x="1654.5" y="141.1" width="344.5" height="22.200" fill="#2b2b2b"/>
<rect x="1654.5" y="185.5" width="344.5" height="22.200" fill="#2b2b2b"/>
<rect x="1654.5" y="229.900" width="344.5" height="22.200" fill="#334d80"/>
<path d="M1667.4 93H1694.5Q1698.5 93 1698.5 97V109.4Q1698.5 113.4 1694.5 113.4H1667.4Q1663.4 113.4 1663.4 109.4V97Q1663.4 93 1667.4 93Z" fill="#272727"/>
<rect x="1663.9" y="93.500" width="34.09999999999991" height="19.400" rx="4" fill="none" stroke="#3a3a3a" stroke-width="1"/>
<path d="M1708.8 93H1735.4Q1739.4 93 1739.4 97V109.4Q1739.4 113.4 1735.4 113.4H1708.8Q1704.8 113.4 1704.8 109.4V97Q1704.8 93 1708.8 93Z" fill="#272727"/>
<rect x="1705.3" y="93.500" width="33.600000000000136" height="19.400" rx="4" fill="none" stroke="#3a3a3a" stroke-width="1"/>
<path d="M1931.6 93H1958.2Q1962.2 93 1962.2 97V109.4Q1962.2 113.4 1958.2 113.4H1931.6Q1927.6 113.4 1927.6 109.4V97Q1927.6 93 1931.6 93Z" fill="#272727"/>
<rect x="1928.1" y="93.500" width="33.600000000000136" height="19.400" rx="4" fill="none" stroke="#3a3a3a" stroke-width="1"/>
<path d="M1762.8 93H1883.5Q1887.5 93 1887.5 97V109.4Q1887.5 113.4 1883.5 113.4H1762.8Q1758.8 113.4 1758.8 109.4V97Q1758.8 93 1762.8 93Z" fill="#1c1c1c"/>
<rect x="1759.300" y="93.500" width="127.200" height="19.400" rx="4" fill="none" stroke="#343434" stroke-width="1"/>
<path d="M1972.5 93H1986Q1990 93 1990 97V109.4Q1990 113.4 1986 113.4H1972.5Q1968.5 113.4 1968.5 109.4V97Q1968.5 93 1972.5 93Z" fill="#545454"/>
<rect x="1667.300" y="95.500" width="6.500" height="3.600" rx=".8" fill="#e0e0e0"/><path d="M1670 99v10.500h4.500M1670 104.500h4.500" fill="none" stroke="#c0c0c0" stroke-width="1.100"/><rect x="1675" y="102.300" width="8.800" height="3.600" rx=".8" fill="#e8e8e8"/><rect x="1675" y="107.700" width="8.800" height="3.600" rx=".8" fill="#e8e8e8"/>
<path d="M1688.2 102.2l3.3 3.6l3.3 -3.6" fill="none" stroke="#d8d8d8" stroke-width="1.5" stroke-linecap="round" stroke-linejoin="round"/>
<path d="M1709.500 99.500v11h11" fill="none" stroke="#c8c8c8" stroke-width="1.100"/><path d="M1711.800 97.500v10.800h11.500" fill="none" stroke="#c8c8c8" stroke-width="1.100"/><rect x="1714" y="95.300" width="11.500" height="10.800" rx="1" fill="#dcdcdc"/><path d="M1715.200 104.800l3.200-4.500 2.300 3 1.500-1.600 2.300 3.100z" fill="#272727"/><circle cx="1722.700" cy="98.300" r="1.100" fill="#272727"/>
<path d="M1729.2 102.2l3.3 3.6l3.3 -3.6" fill="none" stroke="#d8d8d8" stroke-width="1.5" stroke-linecap="round" stroke-linejoin="round"/>
<circle cx="1774.300" cy="101.500" r="4.300" fill="none" stroke="#e0e0e0" stroke-width="1.300"/><path d="M1771.300 104.800l-5 5.200" stroke="#e0e0e0" stroke-width="1.400"/>
<path d="M1930.500 96h13l-5 6.300v6.700l-3-2v-4.700z" fill="none" stroke="#e4e4e4" stroke-width="1.400" stroke-linejoin="round"/>
<path d="M1951.2 102.2l3.3 3.6l3.3 -3.6" fill="none" stroke="#d8d8d8" stroke-width="1.5" stroke-linecap="round" stroke-linejoin="round"/>
<g fill="none" stroke="#bdbdbd" stroke-width="1.200"><rect x="1972.300" y="97.800" width="11" height="3.200"/><path d="M1973.300 101v9.500h9v-6"/><path d="M1976 104.500h3.500"/></g><circle cx="1984.800" cy="98" r="3.700" fill="#e8e8e8"/><path d="M1982.600 98h4.400M1984.800 95.800v4.400" stroke="#545454" stroke-width="1.100"/>
<path d="M1686.400 168v78.500" stroke="#454545" stroke-width="1"/>
<g transform="translate(1687 130) scale(1)"><rect x="-7.500" y="-7.500" width="15" height="4.200" rx=".6" fill="#e4e4e4"/><rect x="-6.500" y="-2.300" width="13" height="9.800" rx=".6" fill="#e4e4e4"/><rect x="-2.300" y="-.300" width="4.600" height="1.700" rx=".8" fill="#282828"/></g>
<path d="M1683.6 149.2h6.800l-3.400 6.500z" fill="#c8c8c8"/>
<rect x="1699" y="142.500" width="21.600" height="19.600" rx="4.500" fill="#4b4b4b" stroke="#5c5c5c" stroke-width=".8"/>
<g transform="translate(1709.8 152.3) scale(0.95)"><rect x="-7.500" y="-7.500" width="15" height="4.200" rx=".6" fill="#e4e4e4"/><rect x="-6.500" y="-2.300" width="13" height="9.800" rx=".6" fill="#e4e4e4"/><rect x="-2.300" y="-.300" width="4.600" height="1.700" rx=".8" fill="#4b4b4b"/></g>
<rect x="1928.500" y="146" width="12.500" height="12.500" rx="1.500" fill="#f0f0f0"/><path d="M1931 152l3 3 5-6" fill="none" stroke="#222" stroke-width="2"/>
<path d="M1948.9 152.2c3-4.600 12-4.600 15 0-3 4.600-12 4.600-15 0z" fill="#e4e4e4"/><circle cx="1956.4" cy="152.2" r="2.700" fill="#282828"/><circle cx="1956.4" cy="152.2" r="1.200" fill="#e4e4e4"/>
<path d="M1971.4 147.5h3l1.300-1.800h5.400l1.300 1.800h3q1 0 1 1v8.500q0 1-1 1h-14q-1 0-1-1v-8.500q0-1 1-1z" fill="#e4e4e4"/><circle cx="1978.4" cy="153.0" r="3.300" fill="#282828"/><circle cx="1978.4" cy="153.0" r="1.900" fill="#e4e4e4"/><circle cx="1978.4" cy="153.0" r=".8" fill="#282828"/>
<path d="M1706.3 171.0l6.500 3.400-6.500 3.400z" fill="#c8c8c8"/>
<g fill="#e9944b"><circle cx="1728" cy="170" r="3.400"/><circle cx="1735.500" cy="169.500" r="4"/><rect x="1725" y="174" width="12.500" height="7.800" rx="1.200"/><path d="M1738 176.500l3.500-2v6.500l-3.500-2z"/></g><circle cx="1728" cy="170" r="1.100" fill="#282828"/><circle cx="1735.500" cy="169.500" r="1.300" fill="#282828"/>
<rect x="1817" y="164" width="22" height="20.300" rx="4.500" fill="#4b4b4b" stroke="#5c5c5c" stroke-width=".8"/>
<g fill="none" stroke="#2bbf9a" stroke-width="1.300"><circle cx="1824.500" cy="170.500" r="2.600"/><circle cx="1831.500" cy="170" r="3.200"/><rect x="1822" y="175" width="11" height="5.800" rx="1"/><path d="M1833.500 177l3-1.500v5l-3-1.500z"/></g>
<path d="M1948.9 174.4c3-4.600 12-4.600 15 0-3 4.600-12 4.600-15 0z" fill="#e4e4e4"/><circle cx="1956.4" cy="174.4" r="2.700" fill="#282828"/><circle cx="1956.4" cy="174.4" r="1.200" fill="#e4e4e4"/>
<path d="M1971.4 169.70000000000002h3l1.300-1.800h5.400l1.300 1.800h3q1 0 1 1v8.500q0 1-1 1h-14q-1 0-1-1v-8.500q0-1 1-1z" fill="#e4e4e4"/><circle cx="1978.4" cy="175.20000000000002" r="3.300" fill="#282828"/><circle cx="1978.4" cy="175.20000000000002" r="1.900" fill="#e4e4e4"/><circle cx="1978.4" cy="175.20000000000002" r=".8" fill="#282828"/>
<circle cx="1665.200" cy="196.600" r="2.700" fill="#e8e8e8"/>
<path d="M1706.3 193.2l6.500 3.400-6.500 3.400z" fill="#777"/>
<path d="M1725.5 190.8h13l-6.500 11.500z" fill="none" stroke="#7a5436" stroke-width="2.300" stroke-linejoin="round"/>
<path d="M1806.3 191.79999999999998h10l-5 10z" fill="none" stroke="#257a66" stroke-width="1.300"/><rect x="1804.5" y="189.99999999999997" width="3.600" height="3.600" rx=".9" fill="#2b2b2b" stroke="#257a66" stroke-width="1.100"/><rect x="1814.5" y="189.99999999999997" width="3.600" height="3.600" rx=".9" fill="#2b2b2b" stroke="#257a66" stroke-width="1.100"/><rect x="1809.5" y="199.99999999999997" width="3.600" height="3.600" rx=".9" fill="#2b2b2b" stroke="#257a66" stroke-width="1.100"/>
<path d="M1949.500 194.500c3.500 4.500 10.500 4.500 14 0" fill="none" stroke="#a8a8a8" stroke-width="1.300" stroke-linecap="round"/>
<path d="M1971.4 191.9h3l1.300-1.800h5.400l1.300 1.800h3q1 0 1 1v8.500q0 1-1 1h-14q-1 0-1-1v-8.500q0-1 1-1z" fill="#e4e4e4"/><circle cx="1978.4" cy="197.4" r="3.300" fill="#2b2b2b"/><circle cx="1978.4" cy="197.4" r="1.900" fill="#e4e4e4"/><circle cx="1978.4" cy="197.4" r=".8" fill="#2b2b2b"/>
<path d="M1706.3 215.4l6.500 3.400-6.500 3.400z" fill="#c8c8c8"/>
<path d="M1732 210.500a6.300 6.300 0 0 1 6.300 6.300c0 2.500-1.800 3.800-2.300 6h-8c-.5-2.200-2.300-3.500-2.300-6a6.300 6.300 0 0 1 6.300-6.300z" fill="#e9944b"/><rect x="1728.500" y="224" width="7" height="2.300" rx=".8" fill="#e9944b"/><rect x="1729.500" y="227" width="5" height="1.500" rx=".7" fill="#e9944b"/><path d="M1729.500 215.500l2.500 2.500 2.500-2.500M1732 218v4" stroke="#282828" stroke-width="1" fill="none"/>
<circle cx="1809.500" cy="218" r="7" fill="none" stroke="#2bbf9a" stroke-width="1.300"/><circle cx="1809.500" cy="218" r="1.800" fill="#2bbf9a"/><path d="M1809.500 221v7" stroke="#2bbf9a" stroke-width="1.200" stroke-dasharray="2.500 1.200"/>
<path d="M1948.9 218.8c3-4.600 12-4.600 15 0-3 4.600-12 4.600-15 0z" fill="#e4e4e4"/><circle cx="1956.4" cy="218.8" r="2.700" fill="#282828"/><circle cx="1956.4" cy="218.8" r="1.200" fill="#e4e4e4"/>
<path d="M1971.4 214.10000000000002h3l1.300-1.800h5.400l1.300 1.800h3q1 0 1 1v8.500q0 1-1 1h-14q-1 0-1-1v-8.500q0-1 1-1z" fill="#e4e4e4"/><circle cx="1978.4" cy="219.60000000000002" r="3.300" fill="#282828"/><circle cx="1978.4" cy="219.60000000000002" r="1.900" fill="#e4e4e4"/><circle cx="1978.4" cy="219.60000000000002" r=".8" fill="#282828"/>
<g fill="none" stroke="#dfe6f5" stroke-width="1.100"><path d="M1660.500 236.500v9M1662 247.500h7.500M1671 245.500v-4M1662 234.500h4"/><rect x="1658.800" y="233.300" width="3" height="3" fill="#334d80"/><rect x="1658.800" y="246" width="3" height="3" fill="#334d80"/><rect x="1669.500" y="246" width="3" height="3" fill="#334d80"/></g><rect x="1667.800" y="232.800" width="5.200" height="5.200" fill="#f4f4f4"/>
<path d="M1706.3 237.6l6.500 3.400-6.500 3.400z" fill="#c8c8c8"/>
<rect x="1721" y="231" width="22" height="20" rx="4.500" fill="#5d6f94" stroke="#7585a6" stroke-width=".8"/>
<path d="M1725.5 235.3h13l-6.500 11.500z" fill="none" stroke="#e9944b" stroke-width="2.300" stroke-linejoin="round"/>
<rect x="1807.300" y="231" width="22" height="20" rx="4.500" fill="#2f7f8e" stroke="#4a94a0" stroke-width=".8"/>
<path d="M1813.3 236.2h10l-5 10z" fill="none" stroke="#35d3ae" stroke-width="1.300"/><rect x="1811.5" y="234.39999999999998" width="3.600" height="3.600" rx=".9" fill="#2f7f8e" stroke="#35d3ae" stroke-width="1.100"/><rect x="1821.5" y="234.39999999999998" width="3.600" height="3.600" rx=".9" fill="#2f7f8e" stroke="#35d3ae" stroke-width="1.100"/><rect x="1816.5" y="244.39999999999998" width="3.600" height="3.600" rx=".9" fill="#2f7f8e" stroke="#35d3ae" stroke-width="1.100"/>
<path d="M1948.9 241c3-4.600 12-4.600 15 0-3 4.600-12 4.600-15 0z" fill="#f0f0f0"/><circle cx="1956.4" cy="241" r="2.700" fill="#282828"/><circle cx="1956.4" cy="241" r="1.200" fill="#f0f0f0"/>
<path d="M1971.4 236.3h3l1.300-1.800h5.400l1.300 1.800h3q1 0 1 1v8.500q0 1-1 1h-14q-1 0-1-1v-8.500q0-1 1-1z" fill="#f0f0f0"/><circle cx="1978.4" cy="241.8" r="3.300" fill="#334d80"/><circle cx="1978.4" cy="241.8" r="1.900" fill="#f0f0f0"/><circle cx="1978.4" cy="241.8" r=".8" fill="#334d80"/>
</svg>
<div class="rt" style="left:1704px;top:122px">シーンコレクション</div>
<div class="rl" style="left:1725.500px;top:145px">Collection</div>
<div class="rl" style="left:1747.600px;top:167.200px">Camera</div>
<div class="rl" style="left:1747.600px;top:189.400px;color:#7d7d7d">Cube</div>
<div class="rl" style="left:1747.600px;top:211.600px">Light</div>
<div class="rt" style="left:1747.600px;top:233px;color:#f0a04e">立方体</div>
<svg class="abs" style="left:1654px;top:456px" width="346" height="774" viewBox="1654 456 346 774">
<path d="M1659.5 457H1994Q1999 457 1999 462V1228.5Q1999 1228.5 1999 1228.5H1654.5Q1654.5 1228.5 1654.5 1228.5V462Q1654.5 457 1659.5 457Z" fill="#303030"/>
<rect x="1654.5" y="485" width="31.500" height="743.500" fill="#1d1d1d"/>
<rect x="1654.5" y="485" width="31.500" height="39" fill="#1f1f1f"/>
<path d="M1654.5 524h31.500" stroke="#2a2a2a" stroke-width="1"/>
<path d="M1654.5 696h31.500" stroke="#2a2a2a" stroke-width="1"/>
<path d="M1654.5 734.5h31.500" stroke="#2a2a2a" stroke-width="1"/>
<path d="M1654.5 962h31.500" stroke="#2a2a2a" stroke-width="1"/>
<path d="M1661 740H1686Q1686 740 1686 740V769.8Q1686 769.8 1686 769.8H1661Q1657 769.8 1657 765.8V744Q1657 740 1661 740Z" fill="#303030"/>
<path d="M1667.4 460.7H1694Q1698 460.7 1698 464.7V476.5Q1698 480.5 1694 480.5H1667.4Q1663.4 480.5 1663.4 476.5V464.7Q1663.4 460.7 1667.4 460.7Z" fill="#272727"/>
<rect x="1663.900" y="461.200" width="33.600" height="18.800" rx="4" fill="none" stroke="#3a3a3a"/>
<rect x="1667.300" y="462.300" width="17.200" height="7.300" rx="3.650" fill="#ececec"/><rect x="1675.500" y="464.300" width="6.800" height="3.300" rx="1.200" fill="#272727"/><rect x="1667.300" y="471.300" width="17.200" height="7.300" rx="3.650" fill="#ececec"/><rect x="1679" y="473.200" width="3.300" height="3.500" rx="1.200" fill="#272727"/>
<path d="M1688.0 469.7l3.3 3.6l3.3 -3.6" fill="none" stroke="#d8d8d8" stroke-width="1.5" stroke-linecap="round" stroke-linejoin="round"/>
<path d="M1767.3 460.7H1886.5Q1890.5 460.7 1890.5 464.7V476.5Q1890.5 480.5 1886.5 480.5H1767.3Q1763.3 480.5 1763.3 476.5V464.7Q1763.3 460.7 1767.3 460.7Z" fill="#1c1c1c"/>
<rect x="1763.800" y="461.200" width="126.200" height="18.800" rx="4" fill="none" stroke="#383838"/>
<circle cx="1778.300" cy="468.500" r="4.300" fill="none" stroke="#e0e0e0" stroke-width="1.300"/><path d="M1775.300 471.800l-5 5.200" stroke="#e0e0e0" stroke-width="1.400"/>
<path d="M1973 460.7H1985.5Q1989.5 460.7 1989.5 464.7V476.5Q1989.5 480.5 1985.5 480.5H1973Q1969 480.5 1969 476.5V464.7Q1969 460.7 1973 460.7Z" fill="#272727"/>
<rect x="1969.500" y="461.200" width="19.500" height="18.800" rx="4" fill="none" stroke="#3a3a3a"/>
<path d="M1976.0 469.7l3.3 3.6l3.3 -3.6" fill="none" stroke="#d8d8d8" stroke-width="1.5" stroke-linecap="round" stroke-linejoin="round"/>
<g fill="#d6d6d6"><rect x="1664.300" y="500.500" width="1.800" height="7"/><path d="M1662.500 507.500h5.400v4.500a2.700 2.700 0 0 1-5.400 0z"/><path d="M1672 501.500v5a3.500 3.500 0 0 0 2.300 2.800v6.200a1.300 1.300 0 0 0 2.600 0v-6.200a3.500 3.500 0 0 0 2.300-2.800v-5h-1.700v4h-3.800v-4z"/></g>
<g fill="none" stroke="#d0d0d0" stroke-width="1.500"><rect x="1663.800" y="543" width="14.500" height="11.500" rx="1.500"/><path d="M1667 542.500v-2.500h5v2.500"/></g><path d="M1666.500 546.500h7.500M1666.500 549h7.500M1666.500 551.500h7.500" stroke="#d0d0d0" stroke-width="1"/><rect x="1675.300" y="546.500" width="1.600" height="5" fill="#d0d0d0"/><circle cx="1677.700" cy="540.500" r="1" fill="#d0d0d0"/>
<path d="M1663.300 573.500h16v7h-16z" fill="#d8d8d8"/><rect x="1666.500" y="579" width="9.600" height="9" fill="#1d1d1d" stroke="#d0d0d0" stroke-width="1.300"/><path d="M1668 586.500l2.500-3.500 1.500 2 1-1 1.800 2.500z" fill="#d0d0d0"/>
<path d="M1664 606v11.500h11.500" fill="none" stroke="#c8c8c8" stroke-width="1.100"/><path d="M1666.300 603.800v11.400h12" fill="none" stroke="#c8c8c8" stroke-width="1.100"/><rect x="1668.500" y="601.500" width="12" height="11.300" rx="1" fill="#d8d8d8"/><path d="M1669.700 611.500l3.300-4.700 2.400 3.100 1.500-1.600 2.400 3.200z" fill="#1d1d1d"/><circle cx="1677.500" cy="604.700" r="1.100" fill="#1d1d1d"/>
<path d="M1666.800 635c2 3.300 4.300 6.300 4.300 9a4.300 4.300 0 0 1-8.600 0c0-2.700 2.300-5.700 4.300-9z" fill="#c4c4c4"/><circle cx="1676.500" cy="637.500" r="2.600" fill="#dcdcdc"/><circle cx="1674.500" cy="646.500" r="3.800" fill="#1d1d1d" stroke="#dcdcdc" stroke-width="1.400"/><circle cx="1674.500" cy="646.500" r="1.200" fill="#dcdcdc"/>
<circle cx="1671.300" cy="674" r="6.800" fill="none" stroke="#d05a68" stroke-width="1.500"/><path d="M1667.500 671.500c2-.5 3.500.5 3 2s1.500 2 1 3.500-2.500 1-3.500 0-1.500-3.500-.5-5.500zM1673.500 669c1.500 0 3 1.500 3 3s-1.500 1-2.500 0-1.500-2-.5-3z" fill="#d05a68"/><path d="M1663.300 680.500l16-13" stroke="#d05a68" stroke-width="1.200"/>
<g fill="none" stroke="#e0e0e0" stroke-width="1.500"><rect x="1663.800" y="708.300" width="15" height="3.600"/><path d="M1665 712v10h12.600v-10"/></g><rect x="1668.800" y="714.500" width="5" height="1.900" rx=".9" fill="#e0e0e0"/>
<rect x="1666.300" y="749" width="10" height="10.500" fill="#f0a04e"/><path d="M1663 750.500v-4h4M1675.600 746.500h4v4M1679.600 758v4h-4M1667 762h-4v-4" fill="none" stroke="#e9944b" stroke-width="1.200"/>
<path d="M1664.500 793.500l7-7a4.300 4.300 0 0 1 5.500-5.500l-2.800 2.800.6 2.300 2.300.6 2.800-2.800a4.300 4.300 0 0 1-5.500 5.500l-7 7a2 2 0 0 1-2.900-2.900z" fill="#6a96de"/>
<g stroke="#6a96de" stroke-width="1.300" fill="none"><path d="M1666 813l11.500 .3M1666 813l10.500 9.500M1666 813v9.500"/></g><circle cx="1666" cy="812.500" r="2.600" fill="#6a96de"/><circle cx="1677.500" cy="813" r="1.700" fill="#6a96de"/><circle cx="1677" cy="823" r="2" fill="#6a96de"/><circle cx="1666" cy="823" r="1.700" fill="#6a96de"/>
<circle cx="1671" cy="849.500" r="3.300" fill="#6a96de"/><path d="M1677 844a7.500 7.500 0 1 0 1.800 8.500" fill="none" stroke="#6a96de" stroke-width="1.500"/><circle cx="1677.500" cy="843.500" r="2" fill="#6a96de"/>
<g transform="rotate(-30 1671.300 879)"><rect x="1663" y="873.500" width="16.500" height="11" rx="5.500" fill="none" stroke="#6a96de" stroke-width="1.600"/><circle cx="1667.500" cy="879" r="2.400" fill="none" stroke="#6a96de" stroke-width="1.300"/><circle cx="1667.500" cy="879" r=".9" fill="#6a96de"/></g>
<path d="M1666.3 905.7h12l-6 11.500z" fill="none" stroke="#2bbf9a" stroke-width="1.300"/><rect x="1664.5" y="903.9000000000001" width="3.600" height="3.600" rx=".9" fill="#1d1d1d" stroke="#2bbf9a" stroke-width="1.100"/><rect x="1674.5" y="903.9000000000001" width="3.600" height="3.600" rx=".9" fill="#1d1d1d" stroke="#2bbf9a" stroke-width="1.100"/><rect x="1669.5" y="913.9000000000001" width="3.600" height="3.600" rx=".9" fill="#1d1d1d" stroke="#2bbf9a" stroke-width="1.100"/>
<circle cx="1671.300" cy="942.500" r="7.300" fill="#d05a68"/><path d="M1671.300 942.500v-7.300a7.300 7.300 0 0 1 7.300 7.300zM1671.300 942.500l-5.500 4.800a7.300 7.300 0 0 0 5.500 2.500z" fill="#1d1d1d" opacity=".9"/>
<rect x="1701" y="500" width="9.500" height="10" fill="#f0f0f0"/><path d="M1698 501.500v-4h4M1709.500 497.500h4v4M1713.500 509v4h-4M1702 513h-4v-4" fill="none" stroke="#c8c8c8" stroke-width="1.100"/>
<path d="M1975.500 503.500l4.500-5.500 5.500 5-5.500 4.500z" fill="none" stroke="#9a9a9a" stroke-width="1.200" stroke-linejoin="round"/><path d="M1977.500 505.500l-5 5.500" stroke="#9a9a9a" stroke-width="1.200"/>
<path d="M1699 534.5H1987Q1991 534.5 1991 538.5V551.5Q1991 555.5 1987 555.5H1699Q1695 555.5 1695 551.5V538.5Q1695 534.5 1699 534.5Z" fill="#282828"/>
<path d="M1731 534.5H1987Q1991 534.5 1991 538.5V551.5Q1991 555.5 1987 555.5H1731Q1731 555.5 1731 555.5V534.5Q1731 534.5 1731 534.5Z" fill="#1c1c1c"/>
<rect x="1695.500" y="535" width="295" height="20" rx="4" fill="none" stroke="#3c3c3c"/>
<rect x="1702.500" y="540" width="9.500" height="10" fill="#f0f0f0"/><path d="M1699.500 541.500v-4h4M1711 537.500h4v4M1715 549v4h-4M1703.500 553h-4v-4" fill="none" stroke="#c8c8c8" stroke-width="1.100"/>
<path d="M1719.2 543.7l3.3 3.6l3.3 -3.6" fill="none" stroke="#d8d8d8" stroke-width="1.5" stroke-linecap="round" stroke-linejoin="round"/>
<path d="M1699 567.8H1987Q1991 567.8 1991 571.8V876.5Q1991 880.5 1987 880.5H1699Q1695 880.5 1695 876.5V571.8Q1695 567.8 1699 567.8Z" fill="#3d3d3d"/>
<path d="M1703.500 579.300l4.900 4.800 4.900-4.800" fill="none" stroke="#cfcfcf" stroke-width="1.200"/>
<g fill="#5e5e5e"><rect x="1972.5" y="579.6" width="1.300" height="1.300"/><rect x="1972.5" y="583.2" width="1.300" height="1.300"/><rect x="1975.8" y="579.6" width="1.300" height="1.300"/><rect x="1975.8" y="583.2" width="1.300" height="1.300"/><rect x="1979.1" y="579.6" width="1.300" height="1.300"/><rect x="1979.1" y="583.2" width="1.300" height="1.300"/><rect x="1982.4" y="579.6" width="1.300" height="1.300"/><rect x="1982.4" y="583.2" width="1.300" height="1.300"/></g>
<path d="M1816 605.0H1932Q1936 605.0 1936 609.0V625.5999999999999Q1936 625.5999999999999 1936 625.5999999999999H1812Q1812 625.5999999999999 1812 625.5999999999999V609.0Q1812 605.0 1816 605.0Z" fill="#545454"/>
<path d="M1941.5 614.8v-2.500a3 3 0 0 1 6-.3" fill="none" stroke="#c4c4c4" stroke-width="1.200"/><rect x="1945.7" y="614.5999999999999" width="10" height="6.800" rx=".8" fill="none" stroke="#c4c4c4" stroke-width="1.200"/><rect x="1948.2" y="617.0" width="5" height="2" fill="#c4c4c4"/>
<circle cx="1970.800" cy="615.3" r="2.300" fill="#e4e4e4"/>
<path d="M1812 626.9000000000001H1936Q1936 626.9000000000001 1936 626.9000000000001V647.5Q1936 647.5 1936 647.5H1812Q1812 647.5 1812 647.5V626.9000000000001Q1812 626.9000000000001 1812 626.9000000000001Z" fill="#545454"/>
<path d="M1941.5 636.7v-2.500a3 3 0 0 1 6-.3" fill="none" stroke="#c4c4c4" stroke-width="1.200"/><rect x="1945.7" y="636.5" width="10" height="6.800" rx=".8" fill="none" stroke="#c4c4c4" stroke-width="1.200"/><rect x="1948.2" y="638.9000000000001" width="5" height="2" fill="#c4c4c4"/>
<circle cx="1970.800" cy="637.2" r="2.300" fill="#e4e4e4"/>
<path d="M1812 648.7H1936Q1936 648.7 1936 648.7V665.3Q1936 669.3 1932 669.3H1816Q1812 669.3 1812 665.3V648.7Q1812 648.7 1812 648.7Z" fill="#545454"/>
<path d="M1941.5 658.5v-2.500a3 3 0 0 1 6-.3" fill="none" stroke="#c4c4c4" stroke-width="1.200"/><rect x="1945.7" y="658.3" width="10" height="6.800" rx=".8" fill="none" stroke="#c4c4c4" stroke-width="1.200"/><rect x="1948.2" y="660.7" width="5" height="2" fill="#c4c4c4"/>
<circle cx="1970.800" cy="659" r="2.300" fill="#e4e4e4"/>
<path d="M1816 677.6H1932Q1936 677.6 1936 681.6V698.1999999999999Q1936 698.1999999999999 1936 698.1999999999999H1812Q1812 698.1999999999999 1812 698.1999999999999V681.6Q1812 677.6 1816 677.6Z" fill="#545454"/>
<path d="M1941.5 687.4v-2.500a3 3 0 0 1 6-.3" fill="none" stroke="#c4c4c4" stroke-width="1.200"/><rect x="1945.7" y="687.1999999999999" width="10" height="6.800" rx=".8" fill="none" stroke="#c4c4c4" stroke-width="1.200"/><rect x="1948.2" y="689.6" width="5" height="2" fill="#c4c4c4"/>
<circle cx="1970.800" cy="687.9" r="2.300" fill="#e4e4e4"/>
<path d="M1812 699.7H1936Q1936 699.7 1936 699.7V720.3Q1936 720.3 1936 720.3H1812Q1812 720.3 1812 720.3V699.7Q1812 699.7 1812 699.7Z" fill="#545454"/>
<path d="M1941.5 709.5v-2.500a3 3 0 0 1 6-.3" fill="none" stroke="#c4c4c4" stroke-width="1.200"/><rect x="1945.7" y="709.3" width="10" height="6.800" rx=".8" fill="none" stroke="#c4c4c4" stroke-width="1.200"/><rect x="1948.2" y="711.7" width="5" height="2" fill="#c4c4c4"/>
<circle cx="1970.800" cy="710" r="2.300" fill="#e4e4e4"/>
<path d="M1812 721.7H1936Q1936 721.7 1936 721.7V738.3Q1936 742.3 1932 742.3H1816Q1812 742.3 1812 738.3V721.7Q1812 721.7 1812 721.7Z" fill="#545454"/>
<path d="M1941.5 731.5v-2.500a3 3 0 0 1 6-.3" fill="none" stroke="#c4c4c4" stroke-width="1.200"/><rect x="1945.7" y="731.3" width="10" height="6.800" rx=".8" fill="none" stroke="#c4c4c4" stroke-width="1.200"/><rect x="1948.2" y="733.7" width="5" height="2" fill="#c4c4c4"/>
<circle cx="1970.800" cy="732" r="2.300" fill="#e4e4e4"/>
<path d="M1816 750.5H1932Q1936 750.5 1936 754.5V766.3Q1936 770.3 1932 770.3H1816Q1812 770.3 1812 766.3V754.5Q1812 750.5 1816 750.5Z" fill="#282828"/>
<path d="M1926.2 759.2l3.3 3.6l3.3 -3.6" fill="none" stroke="#d8d8d8" stroke-width="1.5" stroke-linecap="round" stroke-linejoin="round"/>
<circle cx="1970.800" cy="760.400" r="2.300" fill="#e4e4e4"/>
<path d="M1816 777.8000000000001H1932Q1936 777.8000000000001 1936 781.8000000000001V798.4Q1936 798.4 1936 798.4H1812Q1812 798.4 1812 798.4V781.8000000000001Q1812 777.8000000000001 1816 777.8000000000001Z" fill="#545454"/>
<path d="M1941.5 787.6v-2.500a3 3 0 0 1 6-.3" fill="none" stroke="#c4c4c4" stroke-width="1.200"/><rect x="1945.7" y="787.4" width="10" height="6.800" rx=".8" fill="none" stroke="#c4c4c4" stroke-width="1.200"/><rect x="1948.2" y="789.8000000000001" width="5" height="2" fill="#c4c4c4"/>
<circle cx="1970.800" cy="788.1" r="2.300" fill="#e4e4e4"/>
<path d="M1812 800.0H1936Q1936 800.0 1936 800.0V820.5999999999999Q1936 820.5999999999999 1936 820.5999999999999H1812Q1812 820.5999999999999 1812 820.5999999999999V800.0Q1812 800.0 1812 800.0Z" fill="#545454"/>
<path d="M1941.5 809.8v-2.500a3 3 0 0 1 6-.3" fill="none" stroke="#c4c4c4" stroke-width="1.200"/><rect x="1945.7" y="809.5999999999999" width="10" height="6.800" rx=".8" fill="none" stroke="#c4c4c4" stroke-width="1.200"/><rect x="1948.2" y="812.0" width="5" height="2" fill="#c4c4c4"/>
<circle cx="1970.800" cy="810.3" r="2.300" fill="#e4e4e4"/>
<path d="M1812 822.1H1936Q1936 822.1 1936 822.1V838.6999999999999Q1936 842.6999999999999 1932 842.6999999999999H1816Q1812 842.6999999999999 1812 838.6999999999999V822.1Q1812 822.1 1812 822.1Z" fill="#545454"/>
<path d="M1941.5 831.9v-2.500a3 3 0 0 1 6-.3" fill="none" stroke="#c4c4c4" stroke-width="1.200"/><rect x="1945.7" y="831.6999999999999" width="10" height="6.800" rx=".8" fill="none" stroke="#c4c4c4" stroke-width="1.200"/><rect x="1948.2" y="834.1" width="5" height="2" fill="#c4c4c4"/>
<circle cx="1970.800" cy="832.4" r="2.300" fill="#e4e4e4"/>
<path d="M1722.8999999999999 861.7l4.800 5.300-4.800 5.300" fill="none" stroke="#cfcfcf" stroke-width="1.200"/>
<path d="M1699 883.6H1987Q1991 883.6 1991 887.6V907Q1991 911 1987 911H1699Q1695 911 1695 907V887.6Q1695 883.6 1699 883.6Z" fill="#3d3d3d"/>
<path d="M1706.8999999999999 892.0l4.800 5.300-4.800 5.300" fill="none" stroke="#cfcfcf" stroke-width="1.200"/>
<g fill="#5e5e5e"><rect x="1972.5" y="894.9" width="1.300" height="1.300"/><rect x="1972.5" y="898.5" width="1.300" height="1.300"/><rect x="1975.8" y="894.9" width="1.300" height="1.300"/><rect x="1975.8" y="898.5" width="1.300" height="1.300"/><rect x="1979.1" y="894.9" width="1.300" height="1.300"/><rect x="1979.1" y="898.5" width="1.300" height="1.300"/><rect x="1982.4" y="894.9" width="1.300" height="1.300"/><rect x="1982.4" y="898.5" width="1.300" height="1.300"/></g>
<path d="M1699 913.8H1987Q1991 913.8 1991 917.8V937.2Q1991 941.2 1987 941.2H1699Q1695 941.2 1695 937.2V917.8Q1695 913.8 1699 913.8Z" fill="#3d3d3d"/>
<path d="M1706.8999999999999 922.2l4.800 5.300-4.800 5.300" fill="none" stroke="#cfcfcf" stroke-width="1.200"/>
<g fill="#5e5e5e"><rect x="1972.5" y="925.1" width="1.300" height="1.300"/><rect x="1972.5" y="928.7" width="1.300" height="1.300"/><rect x="1975.8" y="925.1" width="1.300" height="1.300"/><rect x="1975.8" y="928.7" width="1.300" height="1.300"/><rect x="1979.1" y="925.1" width="1.300" height="1.300"/><rect x="1979.1" y="928.7" width="1.300" height="1.300"/><rect x="1982.4" y="925.1" width="1.300" height="1.300"/><rect x="1982.4" y="928.7" width="1.300" height="1.300"/></g>
<path d="M1699 944H1987Q1991 944 1991 948V967.4Q1991 971.4 1987 971.4H1699Q1695 971.4 1695 967.4V948Q1695 944 1699 944Z" fill="#3d3d3d"/>
<path d="M1706.8999999999999 952.4000000000001l4.800 5.300-4.800 5.300" fill="none" stroke="#cfcfcf" stroke-width="1.200"/>
<g fill="#5e5e5e"><rect x="1972.5" y="955.3000000000001" width="1.300" height="1.300"/><rect x="1972.5" y="958.9000000000001" width="1.300" height="1.300"/><rect x="1975.8" y="955.3000000000001" width="1.300" height="1.300"/><rect x="1975.8" y="958.9000000000001" width="1.300" height="1.300"/><rect x="1979.1" y="955.3000000000001" width="1.300" height="1.300"/><rect x="1979.1" y="958.9000000000001" width="1.300" height="1.300"/><rect x="1982.4" y="955.3000000000001" width="1.300" height="1.300"/><rect x="1982.4" y="958.9000000000001" width="1.300" height="1.300"/></g>
<path d="M1699 974.2H1987Q1991 974.2 1991 978.2V997.6Q1991 1001.6 1987 1001.6H1699Q1695 1001.6 1695 997.6V978.2Q1695 974.2 1699 974.2Z" fill="#3d3d3d"/>
<path d="M1706.8999999999999 982.6000000000001l4.800 5.300-4.800 5.300" fill="none" stroke="#cfcfcf" stroke-width="1.200"/>
<g fill="#5e5e5e"><rect x="1972.5" y="985.5000000000001" width="1.300" height="1.300"/><rect x="1972.5" y="989.1000000000001" width="1.300" height="1.300"/><rect x="1975.8" y="985.5000000000001" width="1.300" height="1.300"/><rect x="1975.8" y="989.1000000000001" width="1.300" height="1.300"/><rect x="1979.1" y="985.5000000000001" width="1.300" height="1.300"/><rect x="1979.1" y="989.1000000000001" width="1.300" height="1.300"/><rect x="1982.4" y="985.5000000000001" width="1.300" height="1.300"/><rect x="1982.4" y="989.1000000000001" width="1.300" height="1.300"/></g>
<path d="M1699 1004.4H1987Q1991 1004.4 1991 1008.4V1027.8Q1991 1031.8 1987 1031.8H1699Q1695 1031.8 1695 1027.8V1008.4Q1695 1004.4 1699 1004.4Z" fill="#3d3d3d"/>
<path d="M1706.8999999999999 1012.8l4.800 5.300-4.800 5.300" fill="none" stroke="#cfcfcf" stroke-width="1.200"/>
<g fill="#5e5e5e"><rect x="1972.5" y="1015.6999999999999" width="1.300" height="1.300"/><rect x="1972.5" y="1019.3" width="1.300" height="1.300"/><rect x="1975.8" y="1015.6999999999999" width="1.300" height="1.300"/><rect x="1975.8" y="1019.3" width="1.300" height="1.300"/><rect x="1979.1" y="1015.6999999999999" width="1.300" height="1.300"/><rect x="1979.1" y="1019.3" width="1.300" height="1.300"/><rect x="1982.4" y="1015.6999999999999" width="1.300" height="1.300"/><rect x="1982.4" y="1019.3" width="1.300" height="1.300"/></g>
<path d="M1699 1034.6H1987Q1991 1034.6 1991 1038.6V1058Q1991 1062 1987 1062H1699Q1695 1062 1695 1058V1038.6Q1695 1034.6 1699 1034.6Z" fill="#3d3d3d"/>
<path d="M1706.8999999999999 1043.0l4.800 5.300-4.800 5.300" fill="none" stroke="#cfcfcf" stroke-width="1.200"/>
<g fill="#5e5e5e"><rect x="1972.5" y="1045.8999999999999" width="1.300" height="1.300"/><rect x="1972.5" y="1049.4999999999998" width="1.300" height="1.300"/><rect x="1975.8" y="1045.8999999999999" width="1.300" height="1.300"/><rect x="1975.8" y="1049.4999999999998" width="1.300" height="1.300"/><rect x="1979.1" y="1045.8999999999999" width="1.300" height="1.300"/><rect x="1979.1" y="1049.4999999999998" width="1.300" height="1.300"/><rect x="1982.4" y="1045.8999999999999" width="1.300" height="1.300"/><rect x="1982.4" y="1049.4999999999998" width="1.300" height="1.300"/></g>
<path d="M1699 1064.8H1987Q1991 1064.8 1991 1068.8V1088.2Q1991 1092.2 1987 1092.2H1699Q1695 1092.2 1695 1088.2V1068.8Q1695 1064.8 1699 1064.8Z" fill="#3d3d3d"/>
<path d="M1706.8999999999999 1073.2l4.800 5.300-4.800 5.300" fill="none" stroke="#cfcfcf" stroke-width="1.200"/>
<g fill="#5e5e5e"><rect x="1972.5" y="1076.1" width="1.300" height="1.300"/><rect x="1972.5" y="1079.6999999999998" width="1.300" height="1.300"/><rect x="1975.8" y="1076.1" width="1.300" height="1.300"/><rect x="1975.8" y="1079.6999999999998" width="1.300" height="1.300"/><rect x="1979.1" y="1076.1" width="1.300" height="1.300"/><rect x="1979.1" y="1079.6999999999998" width="1.300" height="1.300"/><rect x="1982.4" y="1076.1" width="1.300" height="1.300"/><rect x="1982.4" y="1079.6999999999998" width="1.300" height="1.300"/></g>
<path d="M1699 1095H1987Q1991 1095 1991 1099V1118.4Q1991 1122.4 1987 1122.4H1699Q1695 1122.4 1695 1118.4V1099Q1695 1095 1699 1095Z" fill="#3d3d3d"/>
<path d="M1706.8999999999999 1103.4l4.800 5.300-4.800 5.300" fill="none" stroke="#cfcfcf" stroke-width="1.200"/>
<g fill="#5e5e5e"><rect x="1972.5" y="1106.3" width="1.300" height="1.300"/><rect x="1972.5" y="1109.8999999999999" width="1.300" height="1.300"/><rect x="1975.8" y="1106.3" width="1.300" height="1.300"/><rect x="1975.8" y="1109.8999999999999" width="1.300" height="1.300"/><rect x="1979.1" y="1106.3" width="1.300" height="1.300"/><rect x="1979.1" y="1109.8999999999999" width="1.300" height="1.300"/><rect x="1982.4" y="1106.3" width="1.300" height="1.300"/><rect x="1982.4" y="1109.8999999999999" width="1.300" height="1.300"/></g>
</svg>
<div class="rt" style="left:1723.700px;top:497px">立方体</div>
<div class="rt" style="left:1738.600px;top:537px">立方体</div>
<div class="rt" style="left:1721px;top:573.500px">トランスフォーム</div>
<div class="lab" style="top:607.3px">位置 <span style="font-size:13.200px">X</span></div>
<div class="val" style="top:607.5px">0 m</div>
<div class="lab" style="top:629.2px"><span style="font-size:13.200px">Y</span></div>
<div class="val" style="top:629.4000000000001px">0 m</div>
<div class="lab" style="top:651px"><span style="font-size:13.200px">Z</span></div>
<div class="val" style="top:651.2px">0 m</div>
<div class="lab" style="top:679.9px">回転 <span style="font-size:13.200px">X</span></div>
<div class="val" style="top:680.1px">0°</div>
<div class="lab" style="top:702px"><span style="font-size:13.200px">Y</span></div>
<div class="val" style="top:702.2px">0°</div>
<div class="lab" style="top:724px"><span style="font-size:13.200px">Z</span></div>
<div class="val" style="top:724.2px">0°</div>
<div class="lab" style="top:780.1px">スケール <span style="font-size:13.200px">X</span></div>
<div class="val" style="top:780.3000000000001px">1.000</div>
<div class="lab" style="top:802.3px"><span style="font-size:13.200px">Y</span></div>
<div class="val" style="top:802.5px">1.000</div>
<div class="lab" style="top:824.4px"><span style="font-size:13.200px">Z</span></div>
<div class="val" style="top:824.6px">1.000</div>
<div class="lab" style="top:752.400px">モード</div>
<div class="rt" style="left:1820px;top:752.400px"><span style="font-size:13.200px">XYZ</span> オイラー角</div>
<div class="rt" style="left:1735.400px;top:859px">デルタトランスフォーム</div>
<div class="rt" style="left:1720px;top:889.3px">関係</div>
<div class="rt" style="left:1720px;top:919.5px">コレクション</div>
<div class="rt" style="left:1720px;top:949.7px">インスタンス化</div>
<div class="rt" style="left:1720px;top:979.9px">モーションパス</div>
<div class="rt" style="left:1720px;top:1010.1px">可視性</div>
<div class="rt" style="left:1720px;top:1040.3px">ビューポート表示</div>
<div class="rt" style="left:1720px;top:1070.5px">ラインアート</div>
<div class="rt" style="left:1720px;top:1100.7px">カスタムプロパティ</div>
<div id="desk"></div><div id="winb"></div>
<svg class="abs" style="left:0;top:1140px" width="1652" height="110" viewBox="0 1140 1652 110">
<path d="M6.5 1142.5H1645.5Q1650.5 1142.5 1650.5 1147.5V1221.2Q1650.5 1226.2 1645.5 1226.2H6.5Q1.5 1226.2 1.5 1221.2V1147.5Q1.5 1142.5 6.5 1142.5Z" fill="#303030"/>
<rect x="1.500" y="1170" width="1649" height="25.500" fill="#1e1e1e"/>
<path d="M1.500 1195.500h1649v25.700q0 5-5 5h-1639q-5 0-5-5z" fill="#242424"/>
<rect x="61.74" y="1195.500" width="1528.86" height="30.700" fill="#2d2d2d"/>
<path d="M24.9 1195.500v30.700M55.6 1195.500v30.700M86.3 1195.500v30.700M117.0 1195.500v30.700M147.7 1195.500v30.700M178.4 1195.500v30.700M209.1 1195.500v30.700M239.8 1195.500v30.700M270.5 1195.500v30.700M301.2 1195.500v30.700M331.9 1195.500v30.700M362.6 1195.500v30.700M393.3 1195.500v30.700M424.0 1195.500v30.700M454.7 1195.500v30.700M485.4 1195.500v30.700M516.1 1195.500v30.700M546.8 1195.500v30.700M577.5 1195.500v30.700M608.2 1195.500v30.700M638.9 1195.500v30.700M669.6 1195.500v30.700M700.3 1195.500v30.700M731.0 1195.500v30.700M761.7 1195.500v30.700M792.4 1195.500v30.700M823.1 1195.500v30.700M853.8 1195.500v30.700M884.5 1195.500v30.700M915.2 1195.500v30.700M945.9 1195.500v30.700M976.6 1195.500v30.700M1007.3 1195.500v30.700M1038.0 1195.500v30.700M1068.7 1195.500v30.700M1099.4 1195.500v30.700M1130.1 1195.500v30.700M1160.8 1195.500v30.700M1191.5 1195.500v30.700M1222.2 1195.500v30.700M1252.9 1195.500v30.700M1283.6 1195.500v30.700M1314.3 1195.500v30.700M1345.0 1195.500v30.700M1375.7 1195.500v30.700M1406.4 1195.500v30.700M1437.1 1195.500v30.700M1467.8 1195.500v30.700M1498.5 1195.500v30.700M1529.2 1195.500v30.700M1559.9 1195.500v30.700M1590.6 1195.500v30.700M1621.3 1195.500v30.700" stroke="#212121" stroke-width="1"/>
<path d="M1590.6 1195.500v30.700" stroke="#151515" stroke-width="1.200"/>
<path d="M61.700 1190v36.200" stroke="#4772b3" stroke-width="1.800"/>
<rect x="9.500" y="1214" width="1632.500" height="10.500" rx="5.250" fill="#565656"/><circle cx="15" cy="1219.300" r="2.700" fill="#303030"/><circle cx="1636.700" cy="1219.300" r="2.700" fill="#303030"/>
<rect x="48" y="1173.400" width="28" height="19.400" rx="4" fill="#4772b3"/>
<path d="M2 1190l4 3.800-4 3.800" fill="none" stroke="#8a8a8a" stroke-width="1.200"/><path d="M1650 1190l-4 3.800 4 3.800" fill="none" stroke="#8a8a8a" stroke-width="1.200"/>
<path d="M13.6 1145.8H39.8Q43.8 1145.8 43.8 1149.8V1162.4Q43.8 1166.4 39.8 1166.4H13.6Q9.6 1166.4 9.6 1162.4V1149.8Q9.6 1145.8 13.6 1145.8Z" fill="#282828"/>
<rect x="10.100" y="1146.300" width="33.200" height="19.600" rx="4" fill="none" stroke="#3a3a3a"/>
<circle cx="22" cy="1156" r="7.800" fill="#f0f0f0"/><path d="M23.800 1151.300l-3.800 4.700 4.300 3" fill="none" stroke="#282828" stroke-width="1.700" stroke-linecap="round" stroke-linejoin="round"/>
<path d="M33.7 1155.2l3.3 3.6l3.3 -3.6" fill="none" stroke="#d8d8d8" stroke-width="1.5" stroke-linecap="round" stroke-linejoin="round"/>
<path d="M54.4 1145.8H187Q191 1145.8 191 1149.8V1162.4Q191 1166.4 187 1166.4H54.4Q50.4 1166.4 50.4 1162.4V1149.8Q50.4 1145.8 54.4 1145.8Z" fill="#282828"/>
<rect x="50.900" y="1146.300" width="139.600" height="19.600" rx="4" fill="none" stroke="#3a3a3a"/><path d="M102 1146v20" stroke="#3a3a3a"/>
<path d="M91.7 1155.2l3.3 3.6l3.3 -3.6" fill="none" stroke="#d8d8d8" stroke-width="1.5" stroke-linecap="round" stroke-linejoin="round"/>
<path d="M181.29999999999998 1155.2l3.3 3.6l3.3 -3.6" fill="none" stroke="#d8d8d8" stroke-width="1.5" stroke-linecap="round" stroke-linejoin="round"/>
<path d="M726.6 1145.8H742.8Q742.8 1145.8 742.8 1145.8V1166.4Q742.8 1166.4 742.8 1166.4H726.6Q722.6 1166.4 722.6 1162.4V1149.8Q722.6 1145.8 726.6 1145.8Z" fill="#545454"/>
<path d="M742.8 1145.8H760.6Q764.6 1145.8 764.6 1149.8V1162.4Q764.6 1166.4 760.6 1166.4H742.8Q742.8 1166.4 742.8 1166.4V1145.8Q742.8 1145.8 742.8 1145.8Z" fill="#2a2a2a" stroke="#3b3b3b" stroke-width="1"/>
<circle cx="732.700" cy="1156.100" r="4.600" fill="#f0f0f0"/>
<path d="M750.95 1155.5l2.75 3l2.75 -3" fill="none" stroke="#5c5c5c" stroke-width="1.1" stroke-linecap="round" stroke-linejoin="round"/>
<path d="M776.5 1145.8H793.0Q793.0 1145.8 793.0 1145.8V1166.4Q793.0 1166.4 793.0 1166.4H776.5Q772.5 1166.4 772.5 1162.4V1149.8Q772.5 1145.8 776.5 1145.8Z" fill="#545454"/>
<path d="M794.0 1145.8H814.9Q814.9 1145.8 814.9 1145.8V1166.4Q814.9 1166.4 814.9 1166.4H794.0Q794.0 1166.4 794.0 1166.4V1145.8Q794.0 1145.8 794.0 1145.8Z" fill="#545454"/>
<path d="M815.9 1145.8H837.5Q837.5 1145.8 837.5 1145.8V1166.4Q837.5 1166.4 837.5 1166.4H815.9Q815.9 1166.4 815.9 1166.4V1145.8Q815.9 1145.8 815.9 1145.8Z" fill="#545454"/>
<path d="M838.5 1145.8H860.0Q860.0 1145.8 860.0 1145.8V1166.4Q860.0 1166.4 860.0 1166.4H838.5Q838.5 1166.4 838.5 1166.4V1145.8Q838.5 1145.8 838.5 1145.8Z" fill="#545454"/>
<path d="M861.0 1145.8H882.3Q882.3 1145.8 882.3 1145.8V1166.4Q882.3 1166.4 882.3 1166.4H861.0Q861.0 1166.4 861.0 1166.4V1145.8Q861.0 1145.8 861.0 1145.8Z" fill="#545454"/>
<path d="M883.3 1145.8H900.6Q904.6 1145.8 904.6 1149.8V1162.4Q904.6 1166.4 900.6 1166.4H883.3Q883.3 1166.4 883.3 1166.4V1145.8Q883.3 1145.8 883.3 1145.8Z" fill="#545454"/>
<rect x="776.800" y="1150.500" width="2.300" height="11.200" fill="#f0f0f0"/><path d="M779.3 1156.1l9 -5.600v11.200z" fill="#f0f0f0"/>
<path d="M801 1156.1l4.500 -5.300 4.500 5.300-4.500 5.300z" fill="#f0f0f0" transform="translate(-3.500 0)"/><path d="M807.5 1156.1l6.5 -4.500v9z" fill="#f0f0f0"/>
<path d="M820.5 1156.1l11.500 -6.500v13z" fill="#f0f0f0"/>
<path d="M855.5 1156.1l-11.500 -6.500v13z" fill="#f0f0f0"/>
<path d="M870.5 1156.1l-6.500 -4.500v9z" fill="#f0f0f0"/><path d="M871 1156.1l4.500 -5.300 4.500 5.300-4.500 5.300z" fill="#f0f0f0"/>
<path d="M898 1156.1l-9 -5.600v11.200z" fill="#f0f0f0"/><rect x="898" y="1150.500" width="2.300" height="11.200" fill="#f0f0f0"/>
<path d="M1340.8 1145.8H1415Q1419 1145.8 1419 1149.8V1162.4Q1419 1166.4 1415 1166.4H1340.8Q1336.8 1166.4 1336.8 1162.4V1149.8Q1336.8 1145.8 1340.8 1145.8Z" fill="#545454"/>
<path d="M1430 1145.8H1447Q1447 1145.8 1447 1145.8V1166.4Q1447 1166.4 1447 1166.4H1430Q1426 1166.4 1426 1162.4V1149.8Q1426 1145.8 1430 1145.8Z" fill="#545454"/>
<path d="M1447.7 1145.8H1544.2Q1544.2 1145.8 1544.2 1145.8V1166.4Q1544.2 1166.4 1544.2 1166.4H1447.7Q1447.7 1166.4 1447.7 1166.4V1145.8Q1447.7 1145.8 1447.7 1145.8Z" fill="#545454"/>
<path d="M1545 1145.8H1638Q1642 1145.8 1642 1149.8V1162.4Q1642 1166.4 1638 1166.4H1545Q1545 1166.4 1545 1166.4V1145.8Q1545 1145.8 1545 1145.8Z" fill="#545454"/>
<circle cx="1436.500" cy="1157.300" r="6" fill="none" stroke="#e8e8e8" stroke-width="1.400"/><path d="M1436.500 1153.500v4h3M1434 1149h5M1441.500 1152.300l1.800-1.800" fill="none" stroke="#e8e8e8" stroke-width="1.300"/>
<rect x="14" y="1231.700" width="11.200" height="16" rx="4.300" fill="none" stroke="#969696" stroke-width="2"/><path d="M13 1239.200v-3.700a4.800 4.800 0 0 1 4.800-4.800h1.600v8.500z" fill="#a4a4a4"/>
<rect x="286.9" y="1231.700" width="11.200" height="16" rx="4.300" fill="none" stroke="#969696" stroke-width="2"/><rect x="291.0" y="1233.300" width="3" height="7" rx="1.500" fill="#b0b0b0"/>
<rect x="559.8" y="1231.700" width="11.200" height="16" rx="4.300" fill="none" stroke="#969696" stroke-width="2"/><path d="M572.0 1239.200v-3.700a4.800 4.800 0 0 0-4.800-4.800h-1.600v8.500z" fill="#a4a4a4"/>
</svg>
<div class="bt" style="left:59.200px;top:1148px">再生</div><div class="bt" style="left:110.600px;top:1148px">キーイング</div><div class="bt" style="left:203px;top:1148px">ビュー</div><div class="bt" style="left:256.400px;top:1148px">マーカー</div>
<div class="fr" style="left:41.7px;color:#fff">1</div>
<div class="fr" style="left:97.0px">10</div>
<div class="fr" style="left:158.4px">20</div>
<div class="fr" style="left:219.8px">30</div>
<div class="fr" style="left:281.2px">40</div>
<div class="fr" style="left:342.6px">50</div>
<div class="fr" style="left:404.0px">60</div>
<div class="fr" style="left:465.4px">70</div>
<div class="fr" style="left:526.8px">80</div>
<div class="fr" style="left:588.2px">90</div>
<div class="fr" style="left:649.6px">100</div>
<div class="fr" style="left:711.0px">110</div>
<div class="fr" style="left:772.4px">120</div>
<div class="fr" style="left:833.8px">130</div>
<div class="fr" style="left:895.2px">140</div>
<div class="fr" style="left:956.6px">150</div>
<div class="fr" style="left:1018.0px">160</div>
<div class="fr" style="left:1079.4px">170</div>
<div class="fr" style="left:1140.8px">180</div>
<div class="fr" style="left:1202.2px">190</div>
<div class="fr" style="left:1263.6px">200</div>
<div class="fr" style="left:1325.0px">210</div>
<div class="fr" style="left:1386.4px">220</div>
<div class="fr" style="left:1447.8px">230</div>
<div class="fr" style="left:1509.2px">240</div>
<div class="fr" style="left:1570.6px">250</div>
<div class="bl" style="left:1374.300px;top:1148px">1</div>
<div class="bt" style="left:1465.400px;top:1148px">開始</div><div class="bl" style="left:1522px;top:1148px">1</div>
<div class="bt" style="left:1562.500px;top:1148px">終了</div><div class="bl" style="left:1604.500px;top:1148px">250</div>
<div class="st" style="left:38.500px">最短パス選択</div><div class="st" style="left:313px">ドリービュー</div><div class="st" style="left:584.500px">マウス位置に押し出し<i>/</i>追加</div>
<div class="st" style="left:1555.500px;letter-spacing:-.1px">立方体<i> | </i>頂点<i>:0/42 | </i>辺<i>:0/80 | </i>面<i>:0/40 | </i>三角面<i>:80 | </i>オブジェクト<i>:1/3 | 3.2.1</i></div>
</div></body></html>
